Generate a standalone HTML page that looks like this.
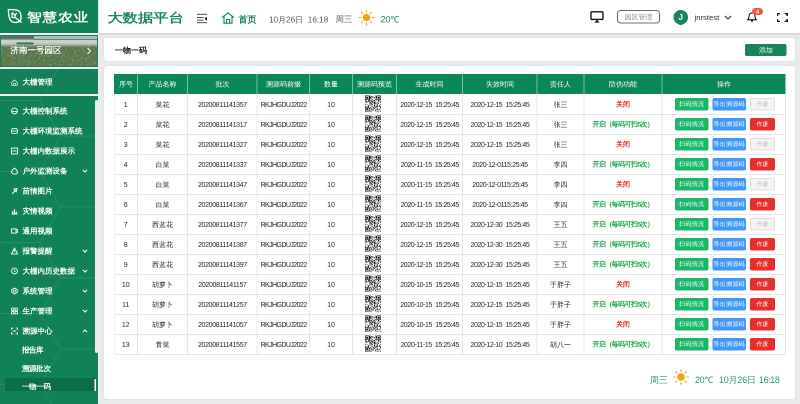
<!DOCTYPE html>
<html><head><meta charset="utf-8">
<style>
*{box-sizing:border-box;margin:0;padding:0}
html,body{width:800px;height:404px;overflow:hidden;background:#eaeaec;font-family:"Liberation Sans",sans-serif}
.abs{position:absolute}
#side{position:absolute;left:0;top:0;width:198px;height:808px;background:#f1eaee}
#logo{position:absolute;left:0;top:0;width:196px;height:66px;background:#118157}
#logo .t{position:absolute;left:54px;top:20px;font-size:29px;font-weight:bold;color:#fff;letter-spacing:2px;white-space:nowrap;line-height:28px;transform-origin:0 50%;transform:scaleY(.85)}
#banner{position:absolute;left:0;top:70px;width:196px;height:64px;background:#118157;padding:2px}
#banner .img{position:absolute;left:2px;top:2px;width:192px;height:60px;overflow:hidden;
 background:linear-gradient(180deg,#9fb0a8 0px,#c5cec9 8px,#d3dad6 16px,#aeb9b0 22px,#7b916c 26px,#6a8558 36px,#5e7a4e 60px)}
#banner .t{position:absolute;left:19px;top:18.6px;font-size:16.6px;font-weight:bold;color:#fff;text-shadow:0 0 2px rgba(0,0,0,.35);white-space:nowrap;line-height:20px}
#m1{position:absolute;left:0;top:138px;width:196px;height:50px;background:#118157}
#m2{position:absolute;left:0;top:192px;width:196px;height:616px;background:#118157;overflow:hidden}
.mi{position:absolute;left:45px;font-size:15px;font-weight:bold;letter-spacing:0;color:#fff;white-space:nowrap;line-height:20px}
.ic{position:absolute;left:22px;width:14px;height:14px}
.chev{position:absolute;left:164px;width:12px;height:8px}
#scroll{position:absolute;left:190px;top:200px;width:6px;height:506px;background:#e9eee9;border-radius:4px}
#act{position:absolute;left:10px;top:756px;width:182px;height:26px;background:#0b6e45}
#head{position:absolute;left:198px;top:0;width:1402px;height:66px;background:#fff;box-shadow:0 2px 4px rgba(0,0,0,.15)}
.card{position:absolute;background:#fff;border-radius:6px;box-shadow:0 0 4px rgba(0,0,0,.08)}
#c1{left:208px;top:76px;width:1382px;height:46px}
#c2{left:208px;top:132px;width:1382px;height:666px}
#tbl{position:absolute;left:228px;top:148px;width:1343px;height:560px;font-size:14px;color:#333}
.thead{position:absolute;left:0;top:0;width:1343px;height:40px;background:#0b8858}
.th{position:absolute;top:0;height:40px;line-height:40px;text-align:center;color:#fff;font-size:14px;white-space:nowrap}
.vlh{position:absolute;top:0;width:2px;height:40px;background:rgba(255,255,255,.45)}
.tr{position:absolute;left:0;width:1343px;height:42px;border-bottom:2px solid #e6e6e6}
.td{position:absolute;top:2px;height:38px;line-height:38px;text-align:center;white-space:pre;font-size:14px;color:#262626}
.td.qr{top:0;padding-top:3.4px;line-height:0}
.td.on{color:#1aa64a;font-weight:bold;font-size:13.6px;letter-spacing:-1.1px}
.td.off{color:#e52a2a;font-weight:bold;font-size:13.6px}
.vl{position:absolute;width:2px;background:#e6e6e6}
.ops{position:absolute;top:8px;height:26px}
.ops span{position:absolute;top:0;display:block;height:25.4px;line-height:25.4px;border-radius:4px;color:#fff;font-size:12.4px;font-weight:normal;letter-spacing:0.7px;text-indent:0.7px;text-align:center;white-space:nowrap}
.b1{left:26px;width:66.6px;background:#1ab66a}
.b2{left:100.6px;width:67px;background:#3f97f6}
.b3{left:176.4px;width:49.4px;background:#e3302d}
.b3.dis{background:#f4f4f4;color:#bbb !important;border:2px solid #dedede;line-height:21.4px !important}
.foot{position:absolute;top:748px;font-size:18px;color:#2a9a62;white-space:nowrap;line-height:24px}
#root{position:absolute;left:0;top:0;width:1600px;height:808px;transform:scale(.5);transform-origin:0 0;will-change:transform}
</style></head><body><div id="root">
<div id="side">
  <div id="logo">
    <svg class="abs" style="left:8px;top:12px" width="48" height="40" viewBox="0 0 24 20"><path d="M4.4 3.6 C8 3.4 12 3.6 14.5 4.8 C16.8 6 17.2 9 17 12.5 C16.6 14.8 14.5 16.4 11.5 16.5 C8.5 16.6 6.5 15 5.6 12.5 C4.8 10 4.5 6.5 4.4 3.6 Z" fill="none" stroke="#fff" stroke-width="1.35"/><path d="M8 6.5 V11.5 H11.3 M8.6 6.6 L11 9.8 L12.6 6.8 M11 9.8 V11.2 L17.6 16.6" fill="none" stroke="#fff" stroke-width="1.25"/></svg>
    <div class="t">智慧农业</div>
  </div>
  <div id="banner"><div class="img">
    <div class="abs" style="left:0;top:0;width:194px;height:8px;background:#aebcba"></div>
    <div class="abs" style="left:0;top:0;width:66px;height:8px;background:#5f6f62"></div>
    <div class="abs" style="left:0;top:7px;width:194px;height:12px;background:#c6d0ca"></div>
    <div class="abs" style="left:66px;top:6px;width:128px;height:2.4px;background:#6f7d74"></div>
    <div class="abs" style="left:0;top:15px;width:194px;height:3px;background:#b3beb7"></div>
    <div class="abs" style="left:0;top:18px;width:194px;height:3px;background:#8d9b8c"></div>
    <div class="abs" style="left:0;top:21px;width:194px;height:39px;background:#5a774c"></div>
    <svg viewBox="0 0 97 20" class="abs" style="left:0;top:21px" width="194" height="40"><filter id="nz" x="0" y="0" width="100%" height="100%"><feTurbulence type="fractalNoise" baseFrequency=".45" numOctaves="2" seed="3"/><feColorMatrix values="0 0 0 0 .5  0 0 0 0 .62  0 0 0 0 .44  0 0 0 1.0 -.48"/></filter><rect width="97" height="20" filter="url(#nz)"/></svg>
    <div class="abs" style="left:30px;top:12px;width:36px;height:6px;background:#1a7f52;border:1px solid #b9cdbf"></div>
    <div class="t">济南一号园区</div>
    <svg class="abs" style="left:171px;top:23px" width="10" height="14" viewBox="0 0 5 7"><path d="M1 0.5 L4 3.5 L1 6.5" fill="none" stroke="#fff" stroke-width="1"/></svg>
  </div></div>
  <div id="m1"><svg viewBox="0 0 98 25" class="abs" style="left:0;top:0" width="196" height="50"><path d="M40.0 31.5L60.5 -4.0M40.0 -39.5L60.5 -75.0M-1.0 31.5L40.0 31.5M40.0 -39.5L60.5 -4.0M101.5 -4.0L122.0 -39.5M101.5 67.0L122.0 31.5M40.0 31.5L60.5 67.0M101.5 -75.0L122.0 -39.5M101.5 -4.0L122.0 31.5M60.5 -75.0L101.5 -75.0M-1.0 -39.5L40.0 -39.5M60.5 67.0L101.5 67.0M60.5 -4.0L101.5 -4.0M-21.5 -4.0L-1.0 -39.5M-21.5 -4.0L-1.0 31.5" fill="none" stroke="rgba(255,255,255,.1)" stroke-width=".9"/></svg>
    <svg class="ic" style="top:20px" viewBox="0 0 6 6"><path d="M0.7 2.9 L3 0.8 L5.3 2.9 V5.4 H0.7 Z M2.1 5.4 V4 H3.9 V5.4" fill="none" stroke="#fff" stroke-width=".6"/></svg>
    <div class="mi" style="top:16px">大棚管理</div>
  </div>
  <div id="m2"><svg viewBox="0 0 98 308" class="abs" style="left:0;top:0" width="196" height="616"><path d="M-1.0 75.5L40.0 75.5M101.5 40.0L122.0 4.5M40.0 146.5L60.5 111.0M-21.5 111.0L-1.0 75.5M40.0 146.5L60.5 182.0M-21.5 111.0L-1.0 146.5M60.5 324.0L101.5 324.0M101.5 40.0L122.0 75.5M101.5 324.0L122.0 288.5M60.5 111.0L101.5 111.0M-1.0 359.5L40.0 359.5M-1.0 146.5L40.0 146.5M40.0 -66.5L60.5 -31.0M40.0 217.5L60.5 182.0M40.0 217.5L60.5 253.0M101.5 111.0L122.0 75.5M101.5 111.0L122.0 146.5M-21.5 182.0L-1.0 146.5M-21.5 182.0L-1.0 217.5M60.5 182.0L101.5 182.0M-1.0 -66.5L40.0 -66.5M40.0 4.5L60.5 -31.0M-1.0 217.5L40.0 217.5M40.0 4.5L60.5 40.0M40.0 288.5L60.5 253.0M40.0 288.5L60.5 324.0M-21.5 253.0L-1.0 217.5M-21.5 253.0L-1.0 288.5M60.5 -31.0L101.5 -31.0M-21.5 -31.0L-1.0 -66.5M101.5 182.0L122.0 146.5M-21.5 -31.0L-1.0 4.5M101.5 182.0L122.0 217.5M40.0 75.5L60.5 40.0M40.0 75.5L60.5 111.0M-1.0 4.5L40.0 4.5M40.0 359.5L60.5 324.0M-1.0 288.5L40.0 288.5M101.5 -31.0L122.0 4.5M-21.5 40.0L-1.0 4.5M101.5 253.0L122.0 217.5M-21.5 40.0L-1.0 75.5M60.5 253.0L101.5 253.0M101.5 253.0L122.0 288.5M60.5 40.0L101.5 40.0M-21.5 324.0L-1.0 288.5M-21.5 324.0L-1.0 359.5" fill="none" stroke="rgba(255,255,255,.1)" stroke-width=".9"/></svg>
<svg class="ic" style="top:23px" viewBox="0 0 6 6"><circle cx="3" cy="3" r="2.5" fill="none" stroke="#fff" stroke-width=".8"/><path d="M1 3.5H5" stroke="#fff" stroke-width=".8"/></svg><div class="mi" style="top:20px">大棚控制系统</div>
<svg class="ic" style="top:63px" viewBox="0 0 6 6"><rect x=".5" y=".8" width="5" height="4.4" rx="1.5" fill="none" stroke="#fff" stroke-width=".8"/><path d="M1 3H5" stroke="#fff" stroke-width=".8"/></svg><div class="mi" style="top:60px">大棚环境监测系统</div>
<svg class="ic" style="top:103px" viewBox="0 0 6 6"><rect x=".5" y=".5" width="5" height="5" fill="none" stroke="#fff" stroke-width=".8"/><path d="M1.5 3.5L3 2.5L4.5 3.5" fill="none" stroke="#fff" stroke-width=".7"/></svg><div class="mi" style="top:100px">大棚内数据展示</div>
<svg class="ic" style="top:143.2px" viewBox="0 0 6 6"><path d="M3 .5C5 2 5.5 3.5 5.5 4 C5.5 5 4.5 5.6 3 5.6 C1.5 5.6 .5 5 .5 4 C.5 3 1.5 1.5 3 .5Z" fill="none" stroke="#fff" stroke-width=".8"/></svg><div class="mi" style="top:140.2px">户外监测设备</div>
<svg class="chev" style="top:146.2px" viewBox="0 0 6 4"><path d="M.8 .8L3 3L5.2 .8" fill="none" stroke="#fff" stroke-width="1"/></svg>
<svg class="ic" style="top:183.2px" viewBox="0 0 6 6"><path d="M1 5.5L3.5 3 M2.5 1.5 L5 .8 L4.5 3.5 Z" fill="none" stroke="#fff" stroke-width=".9"/></svg><div class="mi" style="top:180.2px">苗情图片</div>
<svg class="ic" style="top:223.2px" viewBox="0 0 6 6"><path d="M.5 5.5H5.5 M1.5 5V3 M3 5V1.5 M4.5 5V3.5" stroke="#fff" stroke-width="1"/></svg><div class="mi" style="top:220.2px">灾情视频</div>
<svg class="ic" style="top:263.2px" viewBox="0 0 6 6"><rect x=".5" y="1.2" width="3.8" height="3.6" fill="none" stroke="#fff" stroke-width=".8"/><path d="M4.3 2.5L5.8 1.6V4.4L4.3 3.5" fill="none" stroke="#fff" stroke-width=".7"/></svg><div class="mi" style="top:260.2px">通用视频</div>
<svg class="ic" style="top:303.2px" viewBox="0 0 6 6"><path d="M3 .5L5.7 5.5H.3Z M3 2.2V3.8" fill="none" stroke="#fff" stroke-width=".8"/></svg><div class="mi" style="top:300.2px">报警提醒</div>
<svg class="chev" style="top:306.2px" viewBox="0 0 6 4"><path d="M.8 .8L3 3L5.2 .8" fill="none" stroke="#fff" stroke-width="1"/></svg>
<svg class="ic" style="top:343.4px" viewBox="0 0 6 6"><circle cx="3" cy="3" r="2.5" fill="none" stroke="#fff" stroke-width=".8"/><path d="M3 1.6V3.2L4 3.8" fill="none" stroke="#fff" stroke-width=".7"/></svg><div class="mi" style="top:340.4px">大棚内历史数据</div>
<svg class="chev" style="top:346.4px" viewBox="0 0 6 4"><path d="M.8 .8L3 3L5.2 .8" fill="none" stroke="#fff" stroke-width="1"/></svg>
<svg class="ic" style="top:383.4px" viewBox="0 0 6 6"><path d="M3 .5L5.3 1.8V4.2L3 5.5L.7 4.2V1.8Z" fill="none" stroke="#fff" stroke-width=".8"/><circle cx="3" cy="3" r=".9" fill="none" stroke="#fff" stroke-width=".6"/></svg><div class="mi" style="top:380.4px">系统管理</div>
<svg class="chev" style="top:386.4px" viewBox="0 0 6 4"><path d="M.8 .8L3 3L5.2 .8" fill="none" stroke="#fff" stroke-width="1"/></svg>
<svg class="ic" style="top:423.4px" viewBox="0 0 6 6"><rect x=".5" y=".5" width="2" height="2" fill="none" stroke="#fff" stroke-width=".7"/><rect x="3.5" y=".5" width="2" height="2" fill="none" stroke="#fff" stroke-width=".7"/><rect x=".5" y="3.5" width="2" height="2" fill="none" stroke="#fff" stroke-width=".7"/><rect x="3.5" y="3.5" width="2" height="2" fill="none" stroke="#fff" stroke-width=".7"/></svg><div class="mi" style="top:420.4px">生产管理</div>
<svg class="chev" style="top:426.4px" viewBox="0 0 6 4"><path d="M.8 .8L3 3L5.2 .8" fill="none" stroke="#fff" stroke-width="1"/></svg>
<svg class="ic" style="top:463.4px" viewBox="0 0 6 6"><path d="M.5 2V.5H2 M4 .5H5.5V2 M5.5 4V5.5H4 M2 5.5H.5V4 M1.5 3H4.5" fill="none" stroke="#fff" stroke-width=".8"/></svg><div class="mi" style="top:460.4px">溯源中心</div>
<svg class="chev" style="top:466.4px" viewBox="0 0 6 4"><path d="M.8 3.2L3 1L5.2 3.2" fill="none" stroke="#fff" stroke-width="1"/></svg>
<div class="abs" style="left:10px;top:564px;width:182px;height:26px;background:#0b6e45"></div>
<div class="abs" style="left:189.2px;top:566px;width:2.8px;height:24px;background:#fff"></div>
<div class="mi" style="left:43.6px;top:498px;font-size:15px;letter-spacing:-0.6px">报告库</div>
<div class="mi" style="left:43.6px;top:534.8px;font-size:15px;letter-spacing:-0.6px">溯源批次</div>
<div class="mi" style="left:43.6px;top:571px;font-size:15px;letter-spacing:-0.6px">一物一码</div>
  </div>
  <div id="scroll"></div>
</div>
<div id="head">
  <div class="abs" style="left:17px;top:22px;font-size:29px;font-weight:bold;color:#17855a;white-space:nowrap;line-height:26px;letter-spacing:0px;transform-origin:0 50%;transform:scale(1.05,.85)">大数据平台</div>
  <svg class="abs" style="left:194px;top:26px" width="22" height="22" viewBox="0 0 11 11"><path d="M1 1.25H11 M1 4.4H7.5 M1 7.1H7.5 M1 9.8H11" fill="none" stroke="#111" stroke-width=".75"/><path d="M11 3.6V7.8L8.4 5.7Z" fill="#111"/></svg>
  <svg class="abs" style="left:244px;top:24px" width="28" height="24" viewBox="0 0 14 12"><path d="M1 5.6 L7 0.8 L13 5.6 M3 4.5 V11.2 H11 V4.5 M5.6 11.2 V7.4 H8.6 V11.2" fill="none" stroke="#17855a" stroke-width="1.15" stroke-linejoin="miter"/></svg>
  <div class="abs" style="left:279px;top:28px;font-size:18px;font-weight:bold;color:#17855a;line-height:22px">首页</div>
  <div class="abs" style="left:340px;top:28px;font-size:16.4px;color:#555;line-height:22px;white-space:nowrap">10月26日&nbsp; 16:18</div>
  <div class="abs" style="left:473px;top:28px;font-size:17px;color:#555;line-height:22px">周三</div>
  <svg class="abs" style="left:519.2px;top:18.6px" width="32" height="32" viewBox="0 0 16 16"><circle cx="8" cy="8" r="3.8" fill="#f0a417"/><g stroke="#f0a417" stroke-width="1.1" stroke-linecap="round"><path d="M8 0.6V2.4 M8 13.6V15.4 M0.6 8H2.4 M13.6 8H15.4 M2.8 2.8L4 4 M12 12L13.2 13.2 M13.2 2.8L12 4 M4 12L2.8 13.2"/></g></svg>
  <div class="abs" style="left:563px;top:28px;font-size:18px;color:#17855a;line-height:22px;white-space:nowrap">20℃</div>
  <svg class="abs" style="left:982px;top:22px" width="28" height="24" viewBox="0 0 14 12"><rect x="1" y=".85" width="12" height="7.6" rx=".8" fill="none" stroke="#111" stroke-width="1.35"/><path d="M4.5 11.6 L7 8.6 L9.5 11.6 Z" fill="#111"/></svg>
  <div class="abs" style="left:1036px;top:20px;width:86px;height:27px;border:2px solid #6a6a6a;border-radius:7px;font-size:13.5px;color:#8a8a8a;text-align:center;line-height:25.2px">园区管理</div>
  <div class="abs" style="left:1149px;top:20px;width:29px;height:29px;border-radius:50%;background:#17855a;color:#fff;font-size:16px;font-weight:bold;text-align:center;line-height:29px">J</div>
  <div class="abs" style="left:1191px;top:24px;font-size:15.4px;color:#333;line-height:22px">jnrstest</div>
  <div class="abs" style="left:1248px;top:24px;width:20px;height:20px;background:#f9f9f9"></div>
  <svg class="abs" style="left:1250px;top:30px" width="16" height="10" viewBox="0 0 8 5"><path d="M1 1 L4 4 L7 1" fill="none" stroke="#222" stroke-width=".9"/></svg>
  <svg class="abs" style="left:1294px;top:22px" width="24" height="24" viewBox="0 0 12 12"><path d="M2.3 8.7 L3.1 4.6 C3.4 2.9 4.5 2 6 2 C7.5 2 8.6 2.9 8.9 4.6 L9.7 8.7" fill="none" stroke="#111" stroke-width="1.05" stroke-linejoin="round"/><path d="M.9 8.8 H11.1" stroke="#111" stroke-width="1.15"/><path d="M4.6 9.4 L6 11.4 L7.4 9.4 Z" fill="#111"/></svg>
  <div class="abs" style="left:1306px;top:16px;width:22px;height:14px;border-radius:8px;background:#f0533f;color:#fff;font-size:11px;font-weight:bold;line-height:14px;text-align:center">4</div>
  <svg class="abs" style="left:1356px;top:26px" width="21" height="18" viewBox="0 0 10.5 9"><path d="M.6 2.9V.6H2.9 M7.6 .6H9.9V2.9 M9.9 6.1V8.4H7.6 M2.9 8.4H.6V6.1" fill="none" stroke="#111" stroke-width="1.2"/></svg>
</div>
<div class="card" id="c1">
  <div class="abs" style="left:22px;top:15px;font-size:16px;font-weight:bold;color:#111;line-height:20px">一物一码</div>
  <div class="abs" style="left:1282px;top:11.5px;width:83px;height:24.5px;background:#17855a;border-radius:4px;color:#fff;font-size:14px;text-align:center;line-height:24.5px">添加</div>
</div>
<div class="card" id="c2"></div>
<div id="tbl">
<div class="thead"><div class="th" style="left:0px;width:47px">序号</div><div class="th" style="left:47px;width:100px">产品名称</div><div class="th" style="left:147px;width:139px">批次</div><div class="th" style="left:286px;width:105px">溯源码前缀</div><div class="th" style="left:391px;width:86px">数量</div><div class="th" style="left:477px;width:88px">溯源码预览</div><div class="th" style="left:565px;width:132px">生成时间</div><div class="th" style="left:697px;width:149px">失效时间</div><div class="th" style="left:846px;width:94px">责任人</div><div class="th" style="left:940px;width:156px">防伪功能</div><div class="th" style="left:1096px;width:247px">操作</div><div class="vlh" style="left:46px"></div><div class="vlh" style="left:146px"></div><div class="vlh" style="left:285px"></div><div class="vlh" style="left:390px"></div><div class="vlh" style="left:476px"></div><div class="vlh" style="left:564px"></div><div class="vlh" style="left:696px"></div><div class="vlh" style="left:845px"></div><div class="vlh" style="left:939px"></div><div class="vlh" style="left:1095px"></div></div>
<div class="tr" style="top:40px"><div class="td" style="left:0px;width:47px;letter-spacing:0px;text-indent:0px">1</div><div class="td" style="left:47px;width:100px;letter-spacing:0px;text-indent:0px">菜花</div><div class="td" style="left:147px;width:139px;letter-spacing:-0.66px;text-indent:0.66px">20200811141357</div><div class="td" style="left:286px;width:105px;letter-spacing:-1.16px;text-indent:1.16px">RKJHGDUJ2022</div><div class="td" style="left:391px;width:86px;letter-spacing:0px;text-indent:0px">10</div><div class="td qr" style="left:474px;width:88px"><svg width="32" height="32" viewBox="0 0 25 25"><path d="M0 0h7v1h-7zM8 0h1v1h-1zM16 0h1v1h-1zM18 0h7v1h-7zM0 1h1v1h-1zM6 1h2v1h-2zM9 1h3v1h-3zM17 1h2v1h-2zM24 1h1v1h-1zM0 2h1v1h-1zM2 2h3v1h-3zM6 2h3v1h-3zM11 2h1v1h-1zM13 2h1v1h-1zM15 2h4v1h-4zM20 2h3v1h-3zM24 2h1v1h-1zM0 3h1v1h-1zM2 3h3v1h-3zM6 3h4v1h-4zM12 3h1v1h-1zM14 3h1v1h-1zM17 3h2v1h-2zM20 3h3v1h-3zM24 3h1v1h-1zM0 4h1v1h-1zM2 4h3v1h-3zM6 4h3v1h-3zM10 4h1v1h-1zM15 4h1v1h-1zM18 4h1v1h-1zM20 4h3v1h-3zM24 4h1v1h-1zM0 5h1v1h-1zM6 5h1v1h-1zM10 5h1v1h-1zM12 5h1v1h-1zM17 5h2v1h-2zM24 5h1v1h-1zM0 6h8v1h-8zM11 6h1v1h-1zM15 6h2v1h-2zM18 6h7v1h-7zM0 7h1v1h-1zM2 7h1v1h-1zM5 7h2v1h-2zM8 7h2v1h-2zM13 7h2v1h-2zM17 7h1v1h-1zM20 7h2v1h-2zM23 7h1v1h-1zM1 8h1v1h-1zM5 8h3v1h-3zM9 8h2v1h-2zM12 8h1v1h-1zM14 8h2v1h-2zM20 8h2v1h-2zM1 9h3v1h-3zM5 9h1v1h-1zM7 9h1v1h-1zM10 9h3v1h-3zM16 9h1v1h-1zM20 9h1v1h-1zM23 9h2v1h-2zM0 10h1v1h-1zM3 10h1v1h-1zM7 10h2v1h-2zM11 10h2v1h-2zM14 10h2v1h-2zM19 10h1v1h-1zM21 10h1v1h-1zM23 10h2v1h-2zM0 11h1v1h-1zM2 11h1v1h-1zM6 11h1v1h-1zM8 11h2v1h-2zM11 11h1v1h-1zM13 11h3v1h-3zM17 11h1v1h-1zM7 12h1v1h-1zM9 12h2v1h-2zM14 12h3v1h-3zM18 12h1v1h-1zM20 12h2v1h-2zM8 13h1v1h-1zM10 13h2v1h-2zM19 13h1v1h-1zM24 13h1v1h-1zM0 14h2v1h-2zM3 14h1v1h-1zM7 14h1v1h-1zM9 14h1v1h-1zM11 14h1v1h-1zM14 14h2v1h-2zM17 14h1v1h-1zM19 14h1v1h-1zM23 14h1v1h-1zM5 15h2v1h-2zM9 15h1v1h-1zM14 15h2v1h-2zM18 15h2v1h-2zM22 15h1v1h-1zM0 16h1v1h-1zM4 16h2v1h-2zM11 16h1v1h-1zM14 16h2v1h-2zM19 16h1v1h-1zM22 16h2v1h-2zM0 17h1v1h-1zM4 17h2v1h-2zM9 17h1v1h-1zM12 17h1v1h-1zM15 17h1v1h-1zM17 17h3v1h-3zM21 17h1v1h-1zM23 17h2v1h-2zM0 18h7v1h-7zM8 18h1v1h-1zM11 18h1v1h-1zM13 18h1v1h-1zM16 18h2v1h-2zM24 18h1v1h-1zM0 19h1v1h-1zM6 19h1v1h-1zM8 19h1v1h-1zM10 19h1v1h-1zM13 19h2v1h-2zM16 19h1v1h-1zM18 19h2v1h-2zM24 19h1v1h-1zM0 20h1v1h-1zM2 20h3v1h-3zM6 20h2v1h-2zM10 20h1v1h-1zM13 20h2v1h-2zM19 20h1v1h-1zM23 20h1v1h-1zM0 21h1v1h-1zM2 21h3v1h-3zM6 21h1v1h-1zM8 21h1v1h-1zM10 21h1v1h-1zM12 21h1v1h-1zM15 21h1v1h-1zM18 21h1v1h-1zM21 21h2v1h-2zM0 22h1v1h-1zM2 22h3v1h-3zM6 22h1v1h-1zM10 22h2v1h-2zM13 22h1v1h-1zM16 22h1v1h-1zM18 22h3v1h-3zM23 22h1v1h-1zM0 23h1v1h-1zM6 23h2v1h-2zM12 23h1v1h-1zM16 23h1v1h-1zM0 24h7v1h-7zM8 24h3v1h-3zM16 24h1v1h-1zM18 24h2v1h-2zM21 24h1v1h-1zM23 24h2v1h-2z" fill="#111"/></svg></div><div class="td" style="left:565px;width:132px;letter-spacing:-0.8px;text-indent:0.8px">2020-12-15  15:25:45</div><div class="td" style="left:697px;width:149px;letter-spacing:-0.8px;text-indent:0.8px">2020-12-15  15:25:45</div><div class="td" style="left:846px;width:94px;letter-spacing:0px;text-indent:0px">张三</div><div class="td off" style="left:940px;width:156px">关闭</div><div class="ops" style="left:1096px;width:247px"><span class="b1">扫码情况</span><span class="b2">导出溯源码</span><span class="b3 dis">作废</span></div></div>
<div class="tr" style="top:80px"><div class="td" style="left:0px;width:47px;letter-spacing:0px;text-indent:0px">2</div><div class="td" style="left:47px;width:100px;letter-spacing:0px;text-indent:0px">菜花</div><div class="td" style="left:147px;width:139px;letter-spacing:-0.66px;text-indent:0.66px">20200811141317</div><div class="td" style="left:286px;width:105px;letter-spacing:-1.16px;text-indent:1.16px">RKJHGDUJ2022</div><div class="td" style="left:391px;width:86px;letter-spacing:0px;text-indent:0px">10</div><div class="td qr" style="left:474px;width:88px"><svg width="32" height="32" viewBox="0 0 25 25"><path d="M0 0h7v1h-7zM8 0h1v1h-1zM16 0h1v1h-1zM18 0h7v1h-7zM0 1h1v1h-1zM6 1h2v1h-2zM9 1h3v1h-3zM17 1h2v1h-2zM24 1h1v1h-1zM0 2h1v1h-1zM2 2h3v1h-3zM6 2h3v1h-3zM11 2h1v1h-1zM13 2h1v1h-1zM15 2h4v1h-4zM20 2h3v1h-3zM24 2h1v1h-1zM0 3h1v1h-1zM2 3h3v1h-3zM6 3h4v1h-4zM12 3h1v1h-1zM14 3h1v1h-1zM17 3h2v1h-2zM20 3h3v1h-3zM24 3h1v1h-1zM0 4h1v1h-1zM2 4h3v1h-3zM6 4h3v1h-3zM10 4h1v1h-1zM15 4h1v1h-1zM18 4h1v1h-1zM20 4h3v1h-3zM24 4h1v1h-1zM0 5h1v1h-1zM6 5h1v1h-1zM10 5h1v1h-1zM12 5h1v1h-1zM17 5h2v1h-2zM24 5h1v1h-1zM0 6h8v1h-8zM11 6h1v1h-1zM15 6h2v1h-2zM18 6h7v1h-7zM0 7h1v1h-1zM2 7h1v1h-1zM5 7h2v1h-2zM8 7h2v1h-2zM13 7h2v1h-2zM17 7h1v1h-1zM20 7h2v1h-2zM23 7h1v1h-1zM1 8h1v1h-1zM5 8h3v1h-3zM9 8h2v1h-2zM12 8h1v1h-1zM14 8h2v1h-2zM20 8h2v1h-2zM1 9h3v1h-3zM5 9h1v1h-1zM7 9h1v1h-1zM10 9h3v1h-3zM16 9h1v1h-1zM20 9h1v1h-1zM23 9h2v1h-2zM0 10h1v1h-1zM3 10h1v1h-1zM7 10h2v1h-2zM11 10h2v1h-2zM14 10h2v1h-2zM19 10h1v1h-1zM21 10h1v1h-1zM23 10h2v1h-2zM0 11h1v1h-1zM2 11h1v1h-1zM6 11h1v1h-1zM8 11h2v1h-2zM11 11h1v1h-1zM13 11h3v1h-3zM17 11h1v1h-1zM7 12h1v1h-1zM9 12h2v1h-2zM14 12h3v1h-3zM18 12h1v1h-1zM20 12h2v1h-2zM8 13h1v1h-1zM10 13h2v1h-2zM19 13h1v1h-1zM24 13h1v1h-1zM0 14h2v1h-2zM3 14h1v1h-1zM7 14h1v1h-1zM9 14h1v1h-1zM11 14h1v1h-1zM14 14h2v1h-2zM17 14h1v1h-1zM19 14h1v1h-1zM23 14h1v1h-1zM5 15h2v1h-2zM9 15h1v1h-1zM14 15h2v1h-2zM18 15h2v1h-2zM22 15h1v1h-1zM0 16h1v1h-1zM4 16h2v1h-2zM11 16h1v1h-1zM14 16h2v1h-2zM19 16h1v1h-1zM22 16h2v1h-2zM0 17h1v1h-1zM4 17h2v1h-2zM9 17h1v1h-1zM12 17h1v1h-1zM15 17h1v1h-1zM17 17h3v1h-3zM21 17h1v1h-1zM23 17h2v1h-2zM0 18h7v1h-7zM8 18h1v1h-1zM11 18h1v1h-1zM13 18h1v1h-1zM16 18h2v1h-2zM24 18h1v1h-1zM0 19h1v1h-1zM6 19h1v1h-1zM8 19h1v1h-1zM10 19h1v1h-1zM13 19h2v1h-2zM16 19h1v1h-1zM18 19h2v1h-2zM24 19h1v1h-1zM0 20h1v1h-1zM2 20h3v1h-3zM6 20h2v1h-2zM10 20h1v1h-1zM13 20h2v1h-2zM19 20h1v1h-1zM23 20h1v1h-1zM0 21h1v1h-1zM2 21h3v1h-3zM6 21h1v1h-1zM8 21h1v1h-1zM10 21h1v1h-1zM12 21h1v1h-1zM15 21h1v1h-1zM18 21h1v1h-1zM21 21h2v1h-2zM0 22h1v1h-1zM2 22h3v1h-3zM6 22h1v1h-1zM10 22h2v1h-2zM13 22h1v1h-1zM16 22h1v1h-1zM18 22h3v1h-3zM23 22h1v1h-1zM0 23h1v1h-1zM6 23h2v1h-2zM12 23h1v1h-1zM16 23h1v1h-1zM0 24h7v1h-7zM8 24h3v1h-3zM16 24h1v1h-1zM18 24h2v1h-2zM21 24h1v1h-1zM23 24h2v1h-2z" fill="#111"/></svg></div><div class="td" style="left:565px;width:132px;letter-spacing:-0.8px;text-indent:0.8px">2020-12-15  15:25:45</div><div class="td" style="left:697px;width:149px;letter-spacing:-0.8px;text-indent:0.8px">2020-12-15  15:25:45</div><div class="td" style="left:846px;width:94px;letter-spacing:0px;text-indent:0px">张三</div><div class="td on" style="left:940px;width:156px">开启（每码可扫5次）</div><div class="ops" style="left:1096px;width:247px"><span class="b1">扫码情况</span><span class="b2">导出溯源码</span><span class="b3">作废</span></div></div>
<div class="tr" style="top:120px"><div class="td" style="left:0px;width:47px;letter-spacing:0px;text-indent:0px">3</div><div class="td" style="left:47px;width:100px;letter-spacing:0px;text-indent:0px">菜花</div><div class="td" style="left:147px;width:139px;letter-spacing:-0.66px;text-indent:0.66px">20200811141327</div><div class="td" style="left:286px;width:105px;letter-spacing:-1.16px;text-indent:1.16px">RKJHGDUJ2022</div><div class="td" style="left:391px;width:86px;letter-spacing:0px;text-indent:0px">10</div><div class="td qr" style="left:474px;width:88px"><svg width="32" height="32" viewBox="0 0 25 25"><path d="M0 0h7v1h-7zM8 0h1v1h-1zM16 0h1v1h-1zM18 0h7v1h-7zM0 1h1v1h-1zM6 1h2v1h-2zM9 1h3v1h-3zM17 1h2v1h-2zM24 1h1v1h-1zM0 2h1v1h-1zM2 2h3v1h-3zM6 2h3v1h-3zM11 2h1v1h-1zM13 2h1v1h-1zM15 2h4v1h-4zM20 2h3v1h-3zM24 2h1v1h-1zM0 3h1v1h-1zM2 3h3v1h-3zM6 3h4v1h-4zM12 3h1v1h-1zM14 3h1v1h-1zM17 3h2v1h-2zM20 3h3v1h-3zM24 3h1v1h-1zM0 4h1v1h-1zM2 4h3v1h-3zM6 4h3v1h-3zM10 4h1v1h-1zM15 4h1v1h-1zM18 4h1v1h-1zM20 4h3v1h-3zM24 4h1v1h-1zM0 5h1v1h-1zM6 5h1v1h-1zM10 5h1v1h-1zM12 5h1v1h-1zM17 5h2v1h-2zM24 5h1v1h-1zM0 6h8v1h-8zM11 6h1v1h-1zM15 6h2v1h-2zM18 6h7v1h-7zM0 7h1v1h-1zM2 7h1v1h-1zM5 7h2v1h-2zM8 7h2v1h-2zM13 7h2v1h-2zM17 7h1v1h-1zM20 7h2v1h-2zM23 7h1v1h-1zM1 8h1v1h-1zM5 8h3v1h-3zM9 8h2v1h-2zM12 8h1v1h-1zM14 8h2v1h-2zM20 8h2v1h-2zM1 9h3v1h-3zM5 9h1v1h-1zM7 9h1v1h-1zM10 9h3v1h-3zM16 9h1v1h-1zM20 9h1v1h-1zM23 9h2v1h-2zM0 10h1v1h-1zM3 10h1v1h-1zM7 10h2v1h-2zM11 10h2v1h-2zM14 10h2v1h-2zM19 10h1v1h-1zM21 10h1v1h-1zM23 10h2v1h-2zM0 11h1v1h-1zM2 11h1v1h-1zM6 11h1v1h-1zM8 11h2v1h-2zM11 11h1v1h-1zM13 11h3v1h-3zM17 11h1v1h-1zM7 12h1v1h-1zM9 12h2v1h-2zM14 12h3v1h-3zM18 12h1v1h-1zM20 12h2v1h-2zM8 13h1v1h-1zM10 13h2v1h-2zM19 13h1v1h-1zM24 13h1v1h-1zM0 14h2v1h-2zM3 14h1v1h-1zM7 14h1v1h-1zM9 14h1v1h-1zM11 14h1v1h-1zM14 14h2v1h-2zM17 14h1v1h-1zM19 14h1v1h-1zM23 14h1v1h-1zM5 15h2v1h-2zM9 15h1v1h-1zM14 15h2v1h-2zM18 15h2v1h-2zM22 15h1v1h-1zM0 16h1v1h-1zM4 16h2v1h-2zM11 16h1v1h-1zM14 16h2v1h-2zM19 16h1v1h-1zM22 16h2v1h-2zM0 17h1v1h-1zM4 17h2v1h-2zM9 17h1v1h-1zM12 17h1v1h-1zM15 17h1v1h-1zM17 17h3v1h-3zM21 17h1v1h-1zM23 17h2v1h-2zM0 18h7v1h-7zM8 18h1v1h-1zM11 18h1v1h-1zM13 18h1v1h-1zM16 18h2v1h-2zM24 18h1v1h-1zM0 19h1v1h-1zM6 19h1v1h-1zM8 19h1v1h-1zM10 19h1v1h-1zM13 19h2v1h-2zM16 19h1v1h-1zM18 19h2v1h-2zM24 19h1v1h-1zM0 20h1v1h-1zM2 20h3v1h-3zM6 20h2v1h-2zM10 20h1v1h-1zM13 20h2v1h-2zM19 20h1v1h-1zM23 20h1v1h-1zM0 21h1v1h-1zM2 21h3v1h-3zM6 21h1v1h-1zM8 21h1v1h-1zM10 21h1v1h-1zM12 21h1v1h-1zM15 21h1v1h-1zM18 21h1v1h-1zM21 21h2v1h-2zM0 22h1v1h-1zM2 22h3v1h-3zM6 22h1v1h-1zM10 22h2v1h-2zM13 22h1v1h-1zM16 22h1v1h-1zM18 22h3v1h-3zM23 22h1v1h-1zM0 23h1v1h-1zM6 23h2v1h-2zM12 23h1v1h-1zM16 23h1v1h-1zM0 24h7v1h-7zM8 24h3v1h-3zM16 24h1v1h-1zM18 24h2v1h-2zM21 24h1v1h-1zM23 24h2v1h-2z" fill="#111"/></svg></div><div class="td" style="left:565px;width:132px;letter-spacing:-0.8px;text-indent:0.8px">2020-12-15  15:25:45</div><div class="td" style="left:697px;width:149px;letter-spacing:-0.8px;text-indent:0.8px">2020-12-15  15:25:45</div><div class="td" style="left:846px;width:94px;letter-spacing:0px;text-indent:0px">张三</div><div class="td off" style="left:940px;width:156px">关闭</div><div class="ops" style="left:1096px;width:247px"><span class="b1">扫码情况</span><span class="b2">导出溯源码</span><span class="b3 dis">作废</span></div></div>
<div class="tr" style="top:160px"><div class="td" style="left:0px;width:47px;letter-spacing:0px;text-indent:0px">4</div><div class="td" style="left:47px;width:100px;letter-spacing:0px;text-indent:0px">白菜</div><div class="td" style="left:147px;width:139px;letter-spacing:-0.66px;text-indent:0.66px">20200811141337</div><div class="td" style="left:286px;width:105px;letter-spacing:-1.16px;text-indent:1.16px">RKJHGDUJ2022</div><div class="td" style="left:391px;width:86px;letter-spacing:0px;text-indent:0px">10</div><div class="td qr" style="left:474px;width:88px"><svg width="32" height="32" viewBox="0 0 25 25"><path d="M0 0h7v1h-7zM8 0h1v1h-1zM16 0h1v1h-1zM18 0h7v1h-7zM0 1h1v1h-1zM6 1h2v1h-2zM9 1h3v1h-3zM17 1h2v1h-2zM24 1h1v1h-1zM0 2h1v1h-1zM2 2h3v1h-3zM6 2h3v1h-3zM11 2h1v1h-1zM13 2h1v1h-1zM15 2h4v1h-4zM20 2h3v1h-3zM24 2h1v1h-1zM0 3h1v1h-1zM2 3h3v1h-3zM6 3h4v1h-4zM12 3h1v1h-1zM14 3h1v1h-1zM17 3h2v1h-2zM20 3h3v1h-3zM24 3h1v1h-1zM0 4h1v1h-1zM2 4h3v1h-3zM6 4h3v1h-3zM10 4h1v1h-1zM15 4h1v1h-1zM18 4h1v1h-1zM20 4h3v1h-3zM24 4h1v1h-1zM0 5h1v1h-1zM6 5h1v1h-1zM10 5h1v1h-1zM12 5h1v1h-1zM17 5h2v1h-2zM24 5h1v1h-1zM0 6h8v1h-8zM11 6h1v1h-1zM15 6h2v1h-2zM18 6h7v1h-7zM0 7h1v1h-1zM2 7h1v1h-1zM5 7h2v1h-2zM8 7h2v1h-2zM13 7h2v1h-2zM17 7h1v1h-1zM20 7h2v1h-2zM23 7h1v1h-1zM1 8h1v1h-1zM5 8h3v1h-3zM9 8h2v1h-2zM12 8h1v1h-1zM14 8h2v1h-2zM20 8h2v1h-2zM1 9h3v1h-3zM5 9h1v1h-1zM7 9h1v1h-1zM10 9h3v1h-3zM16 9h1v1h-1zM20 9h1v1h-1zM23 9h2v1h-2zM0 10h1v1h-1zM3 10h1v1h-1zM7 10h2v1h-2zM11 10h2v1h-2zM14 10h2v1h-2zM19 10h1v1h-1zM21 10h1v1h-1zM23 10h2v1h-2zM0 11h1v1h-1zM2 11h1v1h-1zM6 11h1v1h-1zM8 11h2v1h-2zM11 11h1v1h-1zM13 11h3v1h-3zM17 11h1v1h-1zM7 12h1v1h-1zM9 12h2v1h-2zM14 12h3v1h-3zM18 12h1v1h-1zM20 12h2v1h-2zM8 13h1v1h-1zM10 13h2v1h-2zM19 13h1v1h-1zM24 13h1v1h-1zM0 14h2v1h-2zM3 14h1v1h-1zM7 14h1v1h-1zM9 14h1v1h-1zM11 14h1v1h-1zM14 14h2v1h-2zM17 14h1v1h-1zM19 14h1v1h-1zM23 14h1v1h-1zM5 15h2v1h-2zM9 15h1v1h-1zM14 15h2v1h-2zM18 15h2v1h-2zM22 15h1v1h-1zM0 16h1v1h-1zM4 16h2v1h-2zM11 16h1v1h-1zM14 16h2v1h-2zM19 16h1v1h-1zM22 16h2v1h-2zM0 17h1v1h-1zM4 17h2v1h-2zM9 17h1v1h-1zM12 17h1v1h-1zM15 17h1v1h-1zM17 17h3v1h-3zM21 17h1v1h-1zM23 17h2v1h-2zM0 18h7v1h-7zM8 18h1v1h-1zM11 18h1v1h-1zM13 18h1v1h-1zM16 18h2v1h-2zM24 18h1v1h-1zM0 19h1v1h-1zM6 19h1v1h-1zM8 19h1v1h-1zM10 19h1v1h-1zM13 19h2v1h-2zM16 19h1v1h-1zM18 19h2v1h-2zM24 19h1v1h-1zM0 20h1v1h-1zM2 20h3v1h-3zM6 20h2v1h-2zM10 20h1v1h-1zM13 20h2v1h-2zM19 20h1v1h-1zM23 20h1v1h-1zM0 21h1v1h-1zM2 21h3v1h-3zM6 21h1v1h-1zM8 21h1v1h-1zM10 21h1v1h-1zM12 21h1v1h-1zM15 21h1v1h-1zM18 21h1v1h-1zM21 21h2v1h-2zM0 22h1v1h-1zM2 22h3v1h-3zM6 22h1v1h-1zM10 22h2v1h-2zM13 22h1v1h-1zM16 22h1v1h-1zM18 22h3v1h-3zM23 22h1v1h-1zM0 23h1v1h-1zM6 23h2v1h-2zM12 23h1v1h-1zM16 23h1v1h-1zM0 24h7v1h-7zM8 24h3v1h-3zM16 24h1v1h-1zM18 24h2v1h-2zM21 24h1v1h-1zM23 24h2v1h-2z" fill="#111"/></svg></div><div class="td" style="left:565px;width:132px;letter-spacing:-0.8px;text-indent:0.8px">2020-11-15  15:25:45</div><div class="td" style="left:697px;width:149px;letter-spacing:-0.8px;text-indent:0.8px">2020-12-0115:25:45</div><div class="td" style="left:846px;width:94px;letter-spacing:0px;text-indent:0px">李四</div><div class="td on" style="left:940px;width:156px">开启（每码可扫5次）</div><div class="ops" style="left:1096px;width:247px"><span class="b1">扫码情况</span><span class="b2">导出溯源码</span><span class="b3">作废</span></div></div>
<div class="tr" style="top:200px"><div class="td" style="left:0px;width:47px;letter-spacing:0px;text-indent:0px">5</div><div class="td" style="left:47px;width:100px;letter-spacing:0px;text-indent:0px">白菜</div><div class="td" style="left:147px;width:139px;letter-spacing:-0.66px;text-indent:0.66px">20200811141347</div><div class="td" style="left:286px;width:105px;letter-spacing:-1.16px;text-indent:1.16px">RKJHGDUJ2022</div><div class="td" style="left:391px;width:86px;letter-spacing:0px;text-indent:0px">10</div><div class="td qr" style="left:474px;width:88px"><svg width="32" height="32" viewBox="0 0 25 25"><path d="M0 0h7v1h-7zM8 0h1v1h-1zM16 0h1v1h-1zM18 0h7v1h-7zM0 1h1v1h-1zM6 1h2v1h-2zM9 1h3v1h-3zM17 1h2v1h-2zM24 1h1v1h-1zM0 2h1v1h-1zM2 2h3v1h-3zM6 2h3v1h-3zM11 2h1v1h-1zM13 2h1v1h-1zM15 2h4v1h-4zM20 2h3v1h-3zM24 2h1v1h-1zM0 3h1v1h-1zM2 3h3v1h-3zM6 3h4v1h-4zM12 3h1v1h-1zM14 3h1v1h-1zM17 3h2v1h-2zM20 3h3v1h-3zM24 3h1v1h-1zM0 4h1v1h-1zM2 4h3v1h-3zM6 4h3v1h-3zM10 4h1v1h-1zM15 4h1v1h-1zM18 4h1v1h-1zM20 4h3v1h-3zM24 4h1v1h-1zM0 5h1v1h-1zM6 5h1v1h-1zM10 5h1v1h-1zM12 5h1v1h-1zM17 5h2v1h-2zM24 5h1v1h-1zM0 6h8v1h-8zM11 6h1v1h-1zM15 6h2v1h-2zM18 6h7v1h-7zM0 7h1v1h-1zM2 7h1v1h-1zM5 7h2v1h-2zM8 7h2v1h-2zM13 7h2v1h-2zM17 7h1v1h-1zM20 7h2v1h-2zM23 7h1v1h-1zM1 8h1v1h-1zM5 8h3v1h-3zM9 8h2v1h-2zM12 8h1v1h-1zM14 8h2v1h-2zM20 8h2v1h-2zM1 9h3v1h-3zM5 9h1v1h-1zM7 9h1v1h-1zM10 9h3v1h-3zM16 9h1v1h-1zM20 9h1v1h-1zM23 9h2v1h-2zM0 10h1v1h-1zM3 10h1v1h-1zM7 10h2v1h-2zM11 10h2v1h-2zM14 10h2v1h-2zM19 10h1v1h-1zM21 10h1v1h-1zM23 10h2v1h-2zM0 11h1v1h-1zM2 11h1v1h-1zM6 11h1v1h-1zM8 11h2v1h-2zM11 11h1v1h-1zM13 11h3v1h-3zM17 11h1v1h-1zM7 12h1v1h-1zM9 12h2v1h-2zM14 12h3v1h-3zM18 12h1v1h-1zM20 12h2v1h-2zM8 13h1v1h-1zM10 13h2v1h-2zM19 13h1v1h-1zM24 13h1v1h-1zM0 14h2v1h-2zM3 14h1v1h-1zM7 14h1v1h-1zM9 14h1v1h-1zM11 14h1v1h-1zM14 14h2v1h-2zM17 14h1v1h-1zM19 14h1v1h-1zM23 14h1v1h-1zM5 15h2v1h-2zM9 15h1v1h-1zM14 15h2v1h-2zM18 15h2v1h-2zM22 15h1v1h-1zM0 16h1v1h-1zM4 16h2v1h-2zM11 16h1v1h-1zM14 16h2v1h-2zM19 16h1v1h-1zM22 16h2v1h-2zM0 17h1v1h-1zM4 17h2v1h-2zM9 17h1v1h-1zM12 17h1v1h-1zM15 17h1v1h-1zM17 17h3v1h-3zM21 17h1v1h-1zM23 17h2v1h-2zM0 18h7v1h-7zM8 18h1v1h-1zM11 18h1v1h-1zM13 18h1v1h-1zM16 18h2v1h-2zM24 18h1v1h-1zM0 19h1v1h-1zM6 19h1v1h-1zM8 19h1v1h-1zM10 19h1v1h-1zM13 19h2v1h-2zM16 19h1v1h-1zM18 19h2v1h-2zM24 19h1v1h-1zM0 20h1v1h-1zM2 20h3v1h-3zM6 20h2v1h-2zM10 20h1v1h-1zM13 20h2v1h-2zM19 20h1v1h-1zM23 20h1v1h-1zM0 21h1v1h-1zM2 21h3v1h-3zM6 21h1v1h-1zM8 21h1v1h-1zM10 21h1v1h-1zM12 21h1v1h-1zM15 21h1v1h-1zM18 21h1v1h-1zM21 21h2v1h-2zM0 22h1v1h-1zM2 22h3v1h-3zM6 22h1v1h-1zM10 22h2v1h-2zM13 22h1v1h-1zM16 22h1v1h-1zM18 22h3v1h-3zM23 22h1v1h-1zM0 23h1v1h-1zM6 23h2v1h-2zM12 23h1v1h-1zM16 23h1v1h-1zM0 24h7v1h-7zM8 24h3v1h-3zM16 24h1v1h-1zM18 24h2v1h-2zM21 24h1v1h-1zM23 24h2v1h-2z" fill="#111"/></svg></div><div class="td" style="left:565px;width:132px;letter-spacing:-0.8px;text-indent:0.8px">2020-11-15  15:25:45</div><div class="td" style="left:697px;width:149px;letter-spacing:-0.8px;text-indent:0.8px">2020-12-0115:25:45</div><div class="td" style="left:846px;width:94px;letter-spacing:0px;text-indent:0px">李四</div><div class="td off" style="left:940px;width:156px">关闭</div><div class="ops" style="left:1096px;width:247px"><span class="b1">扫码情况</span><span class="b2">导出溯源码</span><span class="b3 dis">作废</span></div></div>
<div class="tr" style="top:240px"><div class="td" style="left:0px;width:47px;letter-spacing:0px;text-indent:0px">6</div><div class="td" style="left:47px;width:100px;letter-spacing:0px;text-indent:0px">白菜</div><div class="td" style="left:147px;width:139px;letter-spacing:-0.66px;text-indent:0.66px">20200811141367</div><div class="td" style="left:286px;width:105px;letter-spacing:-1.16px;text-indent:1.16px">RKJHGDUJ2022</div><div class="td" style="left:391px;width:86px;letter-spacing:0px;text-indent:0px">10</div><div class="td qr" style="left:474px;width:88px"><svg width="32" height="32" viewBox="0 0 25 25"><path d="M0 0h7v1h-7zM8 0h1v1h-1zM16 0h1v1h-1zM18 0h7v1h-7zM0 1h1v1h-1zM6 1h2v1h-2zM9 1h3v1h-3zM17 1h2v1h-2zM24 1h1v1h-1zM0 2h1v1h-1zM2 2h3v1h-3zM6 2h3v1h-3zM11 2h1v1h-1zM13 2h1v1h-1zM15 2h4v1h-4zM20 2h3v1h-3zM24 2h1v1h-1zM0 3h1v1h-1zM2 3h3v1h-3zM6 3h4v1h-4zM12 3h1v1h-1zM14 3h1v1h-1zM17 3h2v1h-2zM20 3h3v1h-3zM24 3h1v1h-1zM0 4h1v1h-1zM2 4h3v1h-3zM6 4h3v1h-3zM10 4h1v1h-1zM15 4h1v1h-1zM18 4h1v1h-1zM20 4h3v1h-3zM24 4h1v1h-1zM0 5h1v1h-1zM6 5h1v1h-1zM10 5h1v1h-1zM12 5h1v1h-1zM17 5h2v1h-2zM24 5h1v1h-1zM0 6h8v1h-8zM11 6h1v1h-1zM15 6h2v1h-2zM18 6h7v1h-7zM0 7h1v1h-1zM2 7h1v1h-1zM5 7h2v1h-2zM8 7h2v1h-2zM13 7h2v1h-2zM17 7h1v1h-1zM20 7h2v1h-2zM23 7h1v1h-1zM1 8h1v1h-1zM5 8h3v1h-3zM9 8h2v1h-2zM12 8h1v1h-1zM14 8h2v1h-2zM20 8h2v1h-2zM1 9h3v1h-3zM5 9h1v1h-1zM7 9h1v1h-1zM10 9h3v1h-3zM16 9h1v1h-1zM20 9h1v1h-1zM23 9h2v1h-2zM0 10h1v1h-1zM3 10h1v1h-1zM7 10h2v1h-2zM11 10h2v1h-2zM14 10h2v1h-2zM19 10h1v1h-1zM21 10h1v1h-1zM23 10h2v1h-2zM0 11h1v1h-1zM2 11h1v1h-1zM6 11h1v1h-1zM8 11h2v1h-2zM11 11h1v1h-1zM13 11h3v1h-3zM17 11h1v1h-1zM7 12h1v1h-1zM9 12h2v1h-2zM14 12h3v1h-3zM18 12h1v1h-1zM20 12h2v1h-2zM8 13h1v1h-1zM10 13h2v1h-2zM19 13h1v1h-1zM24 13h1v1h-1zM0 14h2v1h-2zM3 14h1v1h-1zM7 14h1v1h-1zM9 14h1v1h-1zM11 14h1v1h-1zM14 14h2v1h-2zM17 14h1v1h-1zM19 14h1v1h-1zM23 14h1v1h-1zM5 15h2v1h-2zM9 15h1v1h-1zM14 15h2v1h-2zM18 15h2v1h-2zM22 15h1v1h-1zM0 16h1v1h-1zM4 16h2v1h-2zM11 16h1v1h-1zM14 16h2v1h-2zM19 16h1v1h-1zM22 16h2v1h-2zM0 17h1v1h-1zM4 17h2v1h-2zM9 17h1v1h-1zM12 17h1v1h-1zM15 17h1v1h-1zM17 17h3v1h-3zM21 17h1v1h-1zM23 17h2v1h-2zM0 18h7v1h-7zM8 18h1v1h-1zM11 18h1v1h-1zM13 18h1v1h-1zM16 18h2v1h-2zM24 18h1v1h-1zM0 19h1v1h-1zM6 19h1v1h-1zM8 19h1v1h-1zM10 19h1v1h-1zM13 19h2v1h-2zM16 19h1v1h-1zM18 19h2v1h-2zM24 19h1v1h-1zM0 20h1v1h-1zM2 20h3v1h-3zM6 20h2v1h-2zM10 20h1v1h-1zM13 20h2v1h-2zM19 20h1v1h-1zM23 20h1v1h-1zM0 21h1v1h-1zM2 21h3v1h-3zM6 21h1v1h-1zM8 21h1v1h-1zM10 21h1v1h-1zM12 21h1v1h-1zM15 21h1v1h-1zM18 21h1v1h-1zM21 21h2v1h-2zM0 22h1v1h-1zM2 22h3v1h-3zM6 22h1v1h-1zM10 22h2v1h-2zM13 22h1v1h-1zM16 22h1v1h-1zM18 22h3v1h-3zM23 22h1v1h-1zM0 23h1v1h-1zM6 23h2v1h-2zM12 23h1v1h-1zM16 23h1v1h-1zM0 24h7v1h-7zM8 24h3v1h-3zM16 24h1v1h-1zM18 24h2v1h-2zM21 24h1v1h-1zM23 24h2v1h-2z" fill="#111"/></svg></div><div class="td" style="left:565px;width:132px;letter-spacing:-0.8px;text-indent:0.8px">2020-11-15  15:25:45</div><div class="td" style="left:697px;width:149px;letter-spacing:-0.8px;text-indent:0.8px">2020-12-0115:25:45</div><div class="td" style="left:846px;width:94px;letter-spacing:0px;text-indent:0px">李四</div><div class="td on" style="left:940px;width:156px">开启（每码可扫5次）</div><div class="ops" style="left:1096px;width:247px"><span class="b1">扫码情况</span><span class="b2">导出溯源码</span><span class="b3">作废</span></div></div>
<div class="tr" style="top:280px"><div class="td" style="left:0px;width:47px;letter-spacing:0px;text-indent:0px">7</div><div class="td" style="left:47px;width:100px;letter-spacing:0px;text-indent:0px">西蓝花</div><div class="td" style="left:147px;width:139px;letter-spacing:-0.66px;text-indent:0.66px">20200811141377</div><div class="td" style="left:286px;width:105px;letter-spacing:-1.16px;text-indent:1.16px">RKJHGDUJ2022</div><div class="td" style="left:391px;width:86px;letter-spacing:0px;text-indent:0px">10</div><div class="td qr" style="left:474px;width:88px"><svg width="32" height="32" viewBox="0 0 25 25"><path d="M0 0h7v1h-7zM8 0h1v1h-1zM16 0h1v1h-1zM18 0h7v1h-7zM0 1h1v1h-1zM6 1h2v1h-2zM9 1h3v1h-3zM17 1h2v1h-2zM24 1h1v1h-1zM0 2h1v1h-1zM2 2h3v1h-3zM6 2h3v1h-3zM11 2h1v1h-1zM13 2h1v1h-1zM15 2h4v1h-4zM20 2h3v1h-3zM24 2h1v1h-1zM0 3h1v1h-1zM2 3h3v1h-3zM6 3h4v1h-4zM12 3h1v1h-1zM14 3h1v1h-1zM17 3h2v1h-2zM20 3h3v1h-3zM24 3h1v1h-1zM0 4h1v1h-1zM2 4h3v1h-3zM6 4h3v1h-3zM10 4h1v1h-1zM15 4h1v1h-1zM18 4h1v1h-1zM20 4h3v1h-3zM24 4h1v1h-1zM0 5h1v1h-1zM6 5h1v1h-1zM10 5h1v1h-1zM12 5h1v1h-1zM17 5h2v1h-2zM24 5h1v1h-1zM0 6h8v1h-8zM11 6h1v1h-1zM15 6h2v1h-2zM18 6h7v1h-7zM0 7h1v1h-1zM2 7h1v1h-1zM5 7h2v1h-2zM8 7h2v1h-2zM13 7h2v1h-2zM17 7h1v1h-1zM20 7h2v1h-2zM23 7h1v1h-1zM1 8h1v1h-1zM5 8h3v1h-3zM9 8h2v1h-2zM12 8h1v1h-1zM14 8h2v1h-2zM20 8h2v1h-2zM1 9h3v1h-3zM5 9h1v1h-1zM7 9h1v1h-1zM10 9h3v1h-3zM16 9h1v1h-1zM20 9h1v1h-1zM23 9h2v1h-2zM0 10h1v1h-1zM3 10h1v1h-1zM7 10h2v1h-2zM11 10h2v1h-2zM14 10h2v1h-2zM19 10h1v1h-1zM21 10h1v1h-1zM23 10h2v1h-2zM0 11h1v1h-1zM2 11h1v1h-1zM6 11h1v1h-1zM8 11h2v1h-2zM11 11h1v1h-1zM13 11h3v1h-3zM17 11h1v1h-1zM7 12h1v1h-1zM9 12h2v1h-2zM14 12h3v1h-3zM18 12h1v1h-1zM20 12h2v1h-2zM8 13h1v1h-1zM10 13h2v1h-2zM19 13h1v1h-1zM24 13h1v1h-1zM0 14h2v1h-2zM3 14h1v1h-1zM7 14h1v1h-1zM9 14h1v1h-1zM11 14h1v1h-1zM14 14h2v1h-2zM17 14h1v1h-1zM19 14h1v1h-1zM23 14h1v1h-1zM5 15h2v1h-2zM9 15h1v1h-1zM14 15h2v1h-2zM18 15h2v1h-2zM22 15h1v1h-1zM0 16h1v1h-1zM4 16h2v1h-2zM11 16h1v1h-1zM14 16h2v1h-2zM19 16h1v1h-1zM22 16h2v1h-2zM0 17h1v1h-1zM4 17h2v1h-2zM9 17h1v1h-1zM12 17h1v1h-1zM15 17h1v1h-1zM17 17h3v1h-3zM21 17h1v1h-1zM23 17h2v1h-2zM0 18h7v1h-7zM8 18h1v1h-1zM11 18h1v1h-1zM13 18h1v1h-1zM16 18h2v1h-2zM24 18h1v1h-1zM0 19h1v1h-1zM6 19h1v1h-1zM8 19h1v1h-1zM10 19h1v1h-1zM13 19h2v1h-2zM16 19h1v1h-1zM18 19h2v1h-2zM24 19h1v1h-1zM0 20h1v1h-1zM2 20h3v1h-3zM6 20h2v1h-2zM10 20h1v1h-1zM13 20h2v1h-2zM19 20h1v1h-1zM23 20h1v1h-1zM0 21h1v1h-1zM2 21h3v1h-3zM6 21h1v1h-1zM8 21h1v1h-1zM10 21h1v1h-1zM12 21h1v1h-1zM15 21h1v1h-1zM18 21h1v1h-1zM21 21h2v1h-2zM0 22h1v1h-1zM2 22h3v1h-3zM6 22h1v1h-1zM10 22h2v1h-2zM13 22h1v1h-1zM16 22h1v1h-1zM18 22h3v1h-3zM23 22h1v1h-1zM0 23h1v1h-1zM6 23h2v1h-2zM12 23h1v1h-1zM16 23h1v1h-1zM0 24h7v1h-7zM8 24h3v1h-3zM16 24h1v1h-1zM18 24h2v1h-2zM21 24h1v1h-1zM23 24h2v1h-2z" fill="#111"/></svg></div><div class="td" style="left:565px;width:132px;letter-spacing:-0.8px;text-indent:0.8px">2020-12-15  15:25:45</div><div class="td" style="left:697px;width:149px;letter-spacing:-0.8px;text-indent:0.8px">2020-12-30  15:25:45</div><div class="td" style="left:846px;width:94px;letter-spacing:0px;text-indent:0px">王五</div><div class="td on" style="left:940px;width:156px">开启（每码可扫5次）</div><div class="ops" style="left:1096px;width:247px"><span class="b1">扫码情况</span><span class="b2">导出溯源码</span><span class="b3 dis">作废</span></div></div>
<div class="tr" style="top:320px"><div class="td" style="left:0px;width:47px;letter-spacing:0px;text-indent:0px">8</div><div class="td" style="left:47px;width:100px;letter-spacing:0px;text-indent:0px">西蓝花</div><div class="td" style="left:147px;width:139px;letter-spacing:-0.66px;text-indent:0.66px">20200811141387</div><div class="td" style="left:286px;width:105px;letter-spacing:-1.16px;text-indent:1.16px">RKJHGDUJ2022</div><div class="td" style="left:391px;width:86px;letter-spacing:0px;text-indent:0px">10</div><div class="td qr" style="left:474px;width:88px"><svg width="32" height="32" viewBox="0 0 25 25"><path d="M0 0h7v1h-7zM8 0h1v1h-1zM16 0h1v1h-1zM18 0h7v1h-7zM0 1h1v1h-1zM6 1h2v1h-2zM9 1h3v1h-3zM17 1h2v1h-2zM24 1h1v1h-1zM0 2h1v1h-1zM2 2h3v1h-3zM6 2h3v1h-3zM11 2h1v1h-1zM13 2h1v1h-1zM15 2h4v1h-4zM20 2h3v1h-3zM24 2h1v1h-1zM0 3h1v1h-1zM2 3h3v1h-3zM6 3h4v1h-4zM12 3h1v1h-1zM14 3h1v1h-1zM17 3h2v1h-2zM20 3h3v1h-3zM24 3h1v1h-1zM0 4h1v1h-1zM2 4h3v1h-3zM6 4h3v1h-3zM10 4h1v1h-1zM15 4h1v1h-1zM18 4h1v1h-1zM20 4h3v1h-3zM24 4h1v1h-1zM0 5h1v1h-1zM6 5h1v1h-1zM10 5h1v1h-1zM12 5h1v1h-1zM17 5h2v1h-2zM24 5h1v1h-1zM0 6h8v1h-8zM11 6h1v1h-1zM15 6h2v1h-2zM18 6h7v1h-7zM0 7h1v1h-1zM2 7h1v1h-1zM5 7h2v1h-2zM8 7h2v1h-2zM13 7h2v1h-2zM17 7h1v1h-1zM20 7h2v1h-2zM23 7h1v1h-1zM1 8h1v1h-1zM5 8h3v1h-3zM9 8h2v1h-2zM12 8h1v1h-1zM14 8h2v1h-2zM20 8h2v1h-2zM1 9h3v1h-3zM5 9h1v1h-1zM7 9h1v1h-1zM10 9h3v1h-3zM16 9h1v1h-1zM20 9h1v1h-1zM23 9h2v1h-2zM0 10h1v1h-1zM3 10h1v1h-1zM7 10h2v1h-2zM11 10h2v1h-2zM14 10h2v1h-2zM19 10h1v1h-1zM21 10h1v1h-1zM23 10h2v1h-2zM0 11h1v1h-1zM2 11h1v1h-1zM6 11h1v1h-1zM8 11h2v1h-2zM11 11h1v1h-1zM13 11h3v1h-3zM17 11h1v1h-1zM7 12h1v1h-1zM9 12h2v1h-2zM14 12h3v1h-3zM18 12h1v1h-1zM20 12h2v1h-2zM8 13h1v1h-1zM10 13h2v1h-2zM19 13h1v1h-1zM24 13h1v1h-1zM0 14h2v1h-2zM3 14h1v1h-1zM7 14h1v1h-1zM9 14h1v1h-1zM11 14h1v1h-1zM14 14h2v1h-2zM17 14h1v1h-1zM19 14h1v1h-1zM23 14h1v1h-1zM5 15h2v1h-2zM9 15h1v1h-1zM14 15h2v1h-2zM18 15h2v1h-2zM22 15h1v1h-1zM0 16h1v1h-1zM4 16h2v1h-2zM11 16h1v1h-1zM14 16h2v1h-2zM19 16h1v1h-1zM22 16h2v1h-2zM0 17h1v1h-1zM4 17h2v1h-2zM9 17h1v1h-1zM12 17h1v1h-1zM15 17h1v1h-1zM17 17h3v1h-3zM21 17h1v1h-1zM23 17h2v1h-2zM0 18h7v1h-7zM8 18h1v1h-1zM11 18h1v1h-1zM13 18h1v1h-1zM16 18h2v1h-2zM24 18h1v1h-1zM0 19h1v1h-1zM6 19h1v1h-1zM8 19h1v1h-1zM10 19h1v1h-1zM13 19h2v1h-2zM16 19h1v1h-1zM18 19h2v1h-2zM24 19h1v1h-1zM0 20h1v1h-1zM2 20h3v1h-3zM6 20h2v1h-2zM10 20h1v1h-1zM13 20h2v1h-2zM19 20h1v1h-1zM23 20h1v1h-1zM0 21h1v1h-1zM2 21h3v1h-3zM6 21h1v1h-1zM8 21h1v1h-1zM10 21h1v1h-1zM12 21h1v1h-1zM15 21h1v1h-1zM18 21h1v1h-1zM21 21h2v1h-2zM0 22h1v1h-1zM2 22h3v1h-3zM6 22h1v1h-1zM10 22h2v1h-2zM13 22h1v1h-1zM16 22h1v1h-1zM18 22h3v1h-3zM23 22h1v1h-1zM0 23h1v1h-1zM6 23h2v1h-2zM12 23h1v1h-1zM16 23h1v1h-1zM0 24h7v1h-7zM8 24h3v1h-3zM16 24h1v1h-1zM18 24h2v1h-2zM21 24h1v1h-1zM23 24h2v1h-2z" fill="#111"/></svg></div><div class="td" style="left:565px;width:132px;letter-spacing:-0.8px;text-indent:0.8px">2020-12-15  15:25:45</div><div class="td" style="left:697px;width:149px;letter-spacing:-0.8px;text-indent:0.8px">2020-12-30  15:25:45</div><div class="td" style="left:846px;width:94px;letter-spacing:0px;text-indent:0px">王五</div><div class="td on" style="left:940px;width:156px">开启（每码可扫5次）</div><div class="ops" style="left:1096px;width:247px"><span class="b1">扫码情况</span><span class="b2">导出溯源码</span><span class="b3">作废</span></div></div>
<div class="tr" style="top:360px"><div class="td" style="left:0px;width:47px;letter-spacing:0px;text-indent:0px">9</div><div class="td" style="left:47px;width:100px;letter-spacing:0px;text-indent:0px">西蓝花</div><div class="td" style="left:147px;width:139px;letter-spacing:-0.66px;text-indent:0.66px">20200811141397</div><div class="td" style="left:286px;width:105px;letter-spacing:-1.16px;text-indent:1.16px">RKJHGDUJ2022</div><div class="td" style="left:391px;width:86px;letter-spacing:0px;text-indent:0px">10</div><div class="td qr" style="left:474px;width:88px"><svg width="32" height="32" viewBox="0 0 25 25"><path d="M0 0h7v1h-7zM8 0h1v1h-1zM16 0h1v1h-1zM18 0h7v1h-7zM0 1h1v1h-1zM6 1h2v1h-2zM9 1h3v1h-3zM17 1h2v1h-2zM24 1h1v1h-1zM0 2h1v1h-1zM2 2h3v1h-3zM6 2h3v1h-3zM11 2h1v1h-1zM13 2h1v1h-1zM15 2h4v1h-4zM20 2h3v1h-3zM24 2h1v1h-1zM0 3h1v1h-1zM2 3h3v1h-3zM6 3h4v1h-4zM12 3h1v1h-1zM14 3h1v1h-1zM17 3h2v1h-2zM20 3h3v1h-3zM24 3h1v1h-1zM0 4h1v1h-1zM2 4h3v1h-3zM6 4h3v1h-3zM10 4h1v1h-1zM15 4h1v1h-1zM18 4h1v1h-1zM20 4h3v1h-3zM24 4h1v1h-1zM0 5h1v1h-1zM6 5h1v1h-1zM10 5h1v1h-1zM12 5h1v1h-1zM17 5h2v1h-2zM24 5h1v1h-1zM0 6h8v1h-8zM11 6h1v1h-1zM15 6h2v1h-2zM18 6h7v1h-7zM0 7h1v1h-1zM2 7h1v1h-1zM5 7h2v1h-2zM8 7h2v1h-2zM13 7h2v1h-2zM17 7h1v1h-1zM20 7h2v1h-2zM23 7h1v1h-1zM1 8h1v1h-1zM5 8h3v1h-3zM9 8h2v1h-2zM12 8h1v1h-1zM14 8h2v1h-2zM20 8h2v1h-2zM1 9h3v1h-3zM5 9h1v1h-1zM7 9h1v1h-1zM10 9h3v1h-3zM16 9h1v1h-1zM20 9h1v1h-1zM23 9h2v1h-2zM0 10h1v1h-1zM3 10h1v1h-1zM7 10h2v1h-2zM11 10h2v1h-2zM14 10h2v1h-2zM19 10h1v1h-1zM21 10h1v1h-1zM23 10h2v1h-2zM0 11h1v1h-1zM2 11h1v1h-1zM6 11h1v1h-1zM8 11h2v1h-2zM11 11h1v1h-1zM13 11h3v1h-3zM17 11h1v1h-1zM7 12h1v1h-1zM9 12h2v1h-2zM14 12h3v1h-3zM18 12h1v1h-1zM20 12h2v1h-2zM8 13h1v1h-1zM10 13h2v1h-2zM19 13h1v1h-1zM24 13h1v1h-1zM0 14h2v1h-2zM3 14h1v1h-1zM7 14h1v1h-1zM9 14h1v1h-1zM11 14h1v1h-1zM14 14h2v1h-2zM17 14h1v1h-1zM19 14h1v1h-1zM23 14h1v1h-1zM5 15h2v1h-2zM9 15h1v1h-1zM14 15h2v1h-2zM18 15h2v1h-2zM22 15h1v1h-1zM0 16h1v1h-1zM4 16h2v1h-2zM11 16h1v1h-1zM14 16h2v1h-2zM19 16h1v1h-1zM22 16h2v1h-2zM0 17h1v1h-1zM4 17h2v1h-2zM9 17h1v1h-1zM12 17h1v1h-1zM15 17h1v1h-1zM17 17h3v1h-3zM21 17h1v1h-1zM23 17h2v1h-2zM0 18h7v1h-7zM8 18h1v1h-1zM11 18h1v1h-1zM13 18h1v1h-1zM16 18h2v1h-2zM24 18h1v1h-1zM0 19h1v1h-1zM6 19h1v1h-1zM8 19h1v1h-1zM10 19h1v1h-1zM13 19h2v1h-2zM16 19h1v1h-1zM18 19h2v1h-2zM24 19h1v1h-1zM0 20h1v1h-1zM2 20h3v1h-3zM6 20h2v1h-2zM10 20h1v1h-1zM13 20h2v1h-2zM19 20h1v1h-1zM23 20h1v1h-1zM0 21h1v1h-1zM2 21h3v1h-3zM6 21h1v1h-1zM8 21h1v1h-1zM10 21h1v1h-1zM12 21h1v1h-1zM15 21h1v1h-1zM18 21h1v1h-1zM21 21h2v1h-2zM0 22h1v1h-1zM2 22h3v1h-3zM6 22h1v1h-1zM10 22h2v1h-2zM13 22h1v1h-1zM16 22h1v1h-1zM18 22h3v1h-3zM23 22h1v1h-1zM0 23h1v1h-1zM6 23h2v1h-2zM12 23h1v1h-1zM16 23h1v1h-1zM0 24h7v1h-7zM8 24h3v1h-3zM16 24h1v1h-1zM18 24h2v1h-2zM21 24h1v1h-1zM23 24h2v1h-2z" fill="#111"/></svg></div><div class="td" style="left:565px;width:132px;letter-spacing:-0.8px;text-indent:0.8px">2020-12-15  15:25:45</div><div class="td" style="left:697px;width:149px;letter-spacing:-0.8px;text-indent:0.8px">2020-12-30  15:25:45</div><div class="td" style="left:846px;width:94px;letter-spacing:0px;text-indent:0px">王五</div><div class="td on" style="left:940px;width:156px">开启（每码可扫5次）</div><div class="ops" style="left:1096px;width:247px"><span class="b1">扫码情况</span><span class="b2">导出溯源码</span><span class="b3">作废</span></div></div>
<div class="tr" style="top:400px"><div class="td" style="left:0px;width:47px;letter-spacing:0px;text-indent:0px">10</div><div class="td" style="left:47px;width:100px;letter-spacing:0px;text-indent:0px">胡萝卜</div><div class="td" style="left:147px;width:139px;letter-spacing:-0.66px;text-indent:0.66px">20200811141157</div><div class="td" style="left:286px;width:105px;letter-spacing:-1.16px;text-indent:1.16px">RKJHGDUJ2022</div><div class="td" style="left:391px;width:86px;letter-spacing:0px;text-indent:0px">10</div><div class="td qr" style="left:474px;width:88px"><svg width="32" height="32" viewBox="0 0 25 25"><path d="M0 0h7v1h-7zM8 0h1v1h-1zM16 0h1v1h-1zM18 0h7v1h-7zM0 1h1v1h-1zM6 1h2v1h-2zM9 1h3v1h-3zM17 1h2v1h-2zM24 1h1v1h-1zM0 2h1v1h-1zM2 2h3v1h-3zM6 2h3v1h-3zM11 2h1v1h-1zM13 2h1v1h-1zM15 2h4v1h-4zM20 2h3v1h-3zM24 2h1v1h-1zM0 3h1v1h-1zM2 3h3v1h-3zM6 3h4v1h-4zM12 3h1v1h-1zM14 3h1v1h-1zM17 3h2v1h-2zM20 3h3v1h-3zM24 3h1v1h-1zM0 4h1v1h-1zM2 4h3v1h-3zM6 4h3v1h-3zM10 4h1v1h-1zM15 4h1v1h-1zM18 4h1v1h-1zM20 4h3v1h-3zM24 4h1v1h-1zM0 5h1v1h-1zM6 5h1v1h-1zM10 5h1v1h-1zM12 5h1v1h-1zM17 5h2v1h-2zM24 5h1v1h-1zM0 6h8v1h-8zM11 6h1v1h-1zM15 6h2v1h-2zM18 6h7v1h-7zM0 7h1v1h-1zM2 7h1v1h-1zM5 7h2v1h-2zM8 7h2v1h-2zM13 7h2v1h-2zM17 7h1v1h-1zM20 7h2v1h-2zM23 7h1v1h-1zM1 8h1v1h-1zM5 8h3v1h-3zM9 8h2v1h-2zM12 8h1v1h-1zM14 8h2v1h-2zM20 8h2v1h-2zM1 9h3v1h-3zM5 9h1v1h-1zM7 9h1v1h-1zM10 9h3v1h-3zM16 9h1v1h-1zM20 9h1v1h-1zM23 9h2v1h-2zM0 10h1v1h-1zM3 10h1v1h-1zM7 10h2v1h-2zM11 10h2v1h-2zM14 10h2v1h-2zM19 10h1v1h-1zM21 10h1v1h-1zM23 10h2v1h-2zM0 11h1v1h-1zM2 11h1v1h-1zM6 11h1v1h-1zM8 11h2v1h-2zM11 11h1v1h-1zM13 11h3v1h-3zM17 11h1v1h-1zM7 12h1v1h-1zM9 12h2v1h-2zM14 12h3v1h-3zM18 12h1v1h-1zM20 12h2v1h-2zM8 13h1v1h-1zM10 13h2v1h-2zM19 13h1v1h-1zM24 13h1v1h-1zM0 14h2v1h-2zM3 14h1v1h-1zM7 14h1v1h-1zM9 14h1v1h-1zM11 14h1v1h-1zM14 14h2v1h-2zM17 14h1v1h-1zM19 14h1v1h-1zM23 14h1v1h-1zM5 15h2v1h-2zM9 15h1v1h-1zM14 15h2v1h-2zM18 15h2v1h-2zM22 15h1v1h-1zM0 16h1v1h-1zM4 16h2v1h-2zM11 16h1v1h-1zM14 16h2v1h-2zM19 16h1v1h-1zM22 16h2v1h-2zM0 17h1v1h-1zM4 17h2v1h-2zM9 17h1v1h-1zM12 17h1v1h-1zM15 17h1v1h-1zM17 17h3v1h-3zM21 17h1v1h-1zM23 17h2v1h-2zM0 18h7v1h-7zM8 18h1v1h-1zM11 18h1v1h-1zM13 18h1v1h-1zM16 18h2v1h-2zM24 18h1v1h-1zM0 19h1v1h-1zM6 19h1v1h-1zM8 19h1v1h-1zM10 19h1v1h-1zM13 19h2v1h-2zM16 19h1v1h-1zM18 19h2v1h-2zM24 19h1v1h-1zM0 20h1v1h-1zM2 20h3v1h-3zM6 20h2v1h-2zM10 20h1v1h-1zM13 20h2v1h-2zM19 20h1v1h-1zM23 20h1v1h-1zM0 21h1v1h-1zM2 21h3v1h-3zM6 21h1v1h-1zM8 21h1v1h-1zM10 21h1v1h-1zM12 21h1v1h-1zM15 21h1v1h-1zM18 21h1v1h-1zM21 21h2v1h-2zM0 22h1v1h-1zM2 22h3v1h-3zM6 22h1v1h-1zM10 22h2v1h-2zM13 22h1v1h-1zM16 22h1v1h-1zM18 22h3v1h-3zM23 22h1v1h-1zM0 23h1v1h-1zM6 23h2v1h-2zM12 23h1v1h-1zM16 23h1v1h-1zM0 24h7v1h-7zM8 24h3v1h-3zM16 24h1v1h-1zM18 24h2v1h-2zM21 24h1v1h-1zM23 24h2v1h-2z" fill="#111"/></svg></div><div class="td" style="left:565px;width:132px;letter-spacing:-0.8px;text-indent:0.8px">2020-10-15  15:25:45</div><div class="td" style="left:697px;width:149px;letter-spacing:-0.8px;text-indent:0.8px">2020-12-15  15:25:45</div><div class="td" style="left:846px;width:94px;letter-spacing:0px;text-indent:0px">于胖子</div><div class="td off" style="left:940px;width:156px">关闭</div><div class="ops" style="left:1096px;width:247px"><span class="b1">扫码情况</span><span class="b2">导出溯源码</span><span class="b3">作废</span></div></div>
<div class="tr" style="top:440px"><div class="td" style="left:0px;width:47px;letter-spacing:0px;text-indent:0px">11</div><div class="td" style="left:47px;width:100px;letter-spacing:0px;text-indent:0px">胡萝卜</div><div class="td" style="left:147px;width:139px;letter-spacing:-0.66px;text-indent:0.66px">20200811141257</div><div class="td" style="left:286px;width:105px;letter-spacing:-1.16px;text-indent:1.16px">RKJHGDUJ2022</div><div class="td" style="left:391px;width:86px;letter-spacing:0px;text-indent:0px">10</div><div class="td qr" style="left:474px;width:88px"><svg width="32" height="32" viewBox="0 0 25 25"><path d="M0 0h7v1h-7zM8 0h1v1h-1zM16 0h1v1h-1zM18 0h7v1h-7zM0 1h1v1h-1zM6 1h2v1h-2zM9 1h3v1h-3zM17 1h2v1h-2zM24 1h1v1h-1zM0 2h1v1h-1zM2 2h3v1h-3zM6 2h3v1h-3zM11 2h1v1h-1zM13 2h1v1h-1zM15 2h4v1h-4zM20 2h3v1h-3zM24 2h1v1h-1zM0 3h1v1h-1zM2 3h3v1h-3zM6 3h4v1h-4zM12 3h1v1h-1zM14 3h1v1h-1zM17 3h2v1h-2zM20 3h3v1h-3zM24 3h1v1h-1zM0 4h1v1h-1zM2 4h3v1h-3zM6 4h3v1h-3zM10 4h1v1h-1zM15 4h1v1h-1zM18 4h1v1h-1zM20 4h3v1h-3zM24 4h1v1h-1zM0 5h1v1h-1zM6 5h1v1h-1zM10 5h1v1h-1zM12 5h1v1h-1zM17 5h2v1h-2zM24 5h1v1h-1zM0 6h8v1h-8zM11 6h1v1h-1zM15 6h2v1h-2zM18 6h7v1h-7zM0 7h1v1h-1zM2 7h1v1h-1zM5 7h2v1h-2zM8 7h2v1h-2zM13 7h2v1h-2zM17 7h1v1h-1zM20 7h2v1h-2zM23 7h1v1h-1zM1 8h1v1h-1zM5 8h3v1h-3zM9 8h2v1h-2zM12 8h1v1h-1zM14 8h2v1h-2zM20 8h2v1h-2zM1 9h3v1h-3zM5 9h1v1h-1zM7 9h1v1h-1zM10 9h3v1h-3zM16 9h1v1h-1zM20 9h1v1h-1zM23 9h2v1h-2zM0 10h1v1h-1zM3 10h1v1h-1zM7 10h2v1h-2zM11 10h2v1h-2zM14 10h2v1h-2zM19 10h1v1h-1zM21 10h1v1h-1zM23 10h2v1h-2zM0 11h1v1h-1zM2 11h1v1h-1zM6 11h1v1h-1zM8 11h2v1h-2zM11 11h1v1h-1zM13 11h3v1h-3zM17 11h1v1h-1zM7 12h1v1h-1zM9 12h2v1h-2zM14 12h3v1h-3zM18 12h1v1h-1zM20 12h2v1h-2zM8 13h1v1h-1zM10 13h2v1h-2zM19 13h1v1h-1zM24 13h1v1h-1zM0 14h2v1h-2zM3 14h1v1h-1zM7 14h1v1h-1zM9 14h1v1h-1zM11 14h1v1h-1zM14 14h2v1h-2zM17 14h1v1h-1zM19 14h1v1h-1zM23 14h1v1h-1zM5 15h2v1h-2zM9 15h1v1h-1zM14 15h2v1h-2zM18 15h2v1h-2zM22 15h1v1h-1zM0 16h1v1h-1zM4 16h2v1h-2zM11 16h1v1h-1zM14 16h2v1h-2zM19 16h1v1h-1zM22 16h2v1h-2zM0 17h1v1h-1zM4 17h2v1h-2zM9 17h1v1h-1zM12 17h1v1h-1zM15 17h1v1h-1zM17 17h3v1h-3zM21 17h1v1h-1zM23 17h2v1h-2zM0 18h7v1h-7zM8 18h1v1h-1zM11 18h1v1h-1zM13 18h1v1h-1zM16 18h2v1h-2zM24 18h1v1h-1zM0 19h1v1h-1zM6 19h1v1h-1zM8 19h1v1h-1zM10 19h1v1h-1zM13 19h2v1h-2zM16 19h1v1h-1zM18 19h2v1h-2zM24 19h1v1h-1zM0 20h1v1h-1zM2 20h3v1h-3zM6 20h2v1h-2zM10 20h1v1h-1zM13 20h2v1h-2zM19 20h1v1h-1zM23 20h1v1h-1zM0 21h1v1h-1zM2 21h3v1h-3zM6 21h1v1h-1zM8 21h1v1h-1zM10 21h1v1h-1zM12 21h1v1h-1zM15 21h1v1h-1zM18 21h1v1h-1zM21 21h2v1h-2zM0 22h1v1h-1zM2 22h3v1h-3zM6 22h1v1h-1zM10 22h2v1h-2zM13 22h1v1h-1zM16 22h1v1h-1zM18 22h3v1h-3zM23 22h1v1h-1zM0 23h1v1h-1zM6 23h2v1h-2zM12 23h1v1h-1zM16 23h1v1h-1zM0 24h7v1h-7zM8 24h3v1h-3zM16 24h1v1h-1zM18 24h2v1h-2zM21 24h1v1h-1zM23 24h2v1h-2z" fill="#111"/></svg></div><div class="td" style="left:565px;width:132px;letter-spacing:-0.8px;text-indent:0.8px">2020-10-15  15:25:45</div><div class="td" style="left:697px;width:149px;letter-spacing:-0.8px;text-indent:0.8px">2020-12-15  15:25:45</div><div class="td" style="left:846px;width:94px;letter-spacing:0px;text-indent:0px">于胖子</div><div class="td on" style="left:940px;width:156px">开启（每码可扫5次）</div><div class="ops" style="left:1096px;width:247px"><span class="b1">扫码情况</span><span class="b2">导出溯源码</span><span class="b3">作废</span></div></div>
<div class="tr" style="top:480px"><div class="td" style="left:0px;width:47px;letter-spacing:0px;text-indent:0px">12</div><div class="td" style="left:47px;width:100px;letter-spacing:0px;text-indent:0px">胡萝卜</div><div class="td" style="left:147px;width:139px;letter-spacing:-0.66px;text-indent:0.66px">20200811141057</div><div class="td" style="left:286px;width:105px;letter-spacing:-1.16px;text-indent:1.16px">RKJHGDUJ2022</div><div class="td" style="left:391px;width:86px;letter-spacing:0px;text-indent:0px">10</div><div class="td qr" style="left:474px;width:88px"><svg width="32" height="32" viewBox="0 0 25 25"><path d="M0 0h7v1h-7zM8 0h1v1h-1zM16 0h1v1h-1zM18 0h7v1h-7zM0 1h1v1h-1zM6 1h2v1h-2zM9 1h3v1h-3zM17 1h2v1h-2zM24 1h1v1h-1zM0 2h1v1h-1zM2 2h3v1h-3zM6 2h3v1h-3zM11 2h1v1h-1zM13 2h1v1h-1zM15 2h4v1h-4zM20 2h3v1h-3zM24 2h1v1h-1zM0 3h1v1h-1zM2 3h3v1h-3zM6 3h4v1h-4zM12 3h1v1h-1zM14 3h1v1h-1zM17 3h2v1h-2zM20 3h3v1h-3zM24 3h1v1h-1zM0 4h1v1h-1zM2 4h3v1h-3zM6 4h3v1h-3zM10 4h1v1h-1zM15 4h1v1h-1zM18 4h1v1h-1zM20 4h3v1h-3zM24 4h1v1h-1zM0 5h1v1h-1zM6 5h1v1h-1zM10 5h1v1h-1zM12 5h1v1h-1zM17 5h2v1h-2zM24 5h1v1h-1zM0 6h8v1h-8zM11 6h1v1h-1zM15 6h2v1h-2zM18 6h7v1h-7zM0 7h1v1h-1zM2 7h1v1h-1zM5 7h2v1h-2zM8 7h2v1h-2zM13 7h2v1h-2zM17 7h1v1h-1zM20 7h2v1h-2zM23 7h1v1h-1zM1 8h1v1h-1zM5 8h3v1h-3zM9 8h2v1h-2zM12 8h1v1h-1zM14 8h2v1h-2zM20 8h2v1h-2zM1 9h3v1h-3zM5 9h1v1h-1zM7 9h1v1h-1zM10 9h3v1h-3zM16 9h1v1h-1zM20 9h1v1h-1zM23 9h2v1h-2zM0 10h1v1h-1zM3 10h1v1h-1zM7 10h2v1h-2zM11 10h2v1h-2zM14 10h2v1h-2zM19 10h1v1h-1zM21 10h1v1h-1zM23 10h2v1h-2zM0 11h1v1h-1zM2 11h1v1h-1zM6 11h1v1h-1zM8 11h2v1h-2zM11 11h1v1h-1zM13 11h3v1h-3zM17 11h1v1h-1zM7 12h1v1h-1zM9 12h2v1h-2zM14 12h3v1h-3zM18 12h1v1h-1zM20 12h2v1h-2zM8 13h1v1h-1zM10 13h2v1h-2zM19 13h1v1h-1zM24 13h1v1h-1zM0 14h2v1h-2zM3 14h1v1h-1zM7 14h1v1h-1zM9 14h1v1h-1zM11 14h1v1h-1zM14 14h2v1h-2zM17 14h1v1h-1zM19 14h1v1h-1zM23 14h1v1h-1zM5 15h2v1h-2zM9 15h1v1h-1zM14 15h2v1h-2zM18 15h2v1h-2zM22 15h1v1h-1zM0 16h1v1h-1zM4 16h2v1h-2zM11 16h1v1h-1zM14 16h2v1h-2zM19 16h1v1h-1zM22 16h2v1h-2zM0 17h1v1h-1zM4 17h2v1h-2zM9 17h1v1h-1zM12 17h1v1h-1zM15 17h1v1h-1zM17 17h3v1h-3zM21 17h1v1h-1zM23 17h2v1h-2zM0 18h7v1h-7zM8 18h1v1h-1zM11 18h1v1h-1zM13 18h1v1h-1zM16 18h2v1h-2zM24 18h1v1h-1zM0 19h1v1h-1zM6 19h1v1h-1zM8 19h1v1h-1zM10 19h1v1h-1zM13 19h2v1h-2zM16 19h1v1h-1zM18 19h2v1h-2zM24 19h1v1h-1zM0 20h1v1h-1zM2 20h3v1h-3zM6 20h2v1h-2zM10 20h1v1h-1zM13 20h2v1h-2zM19 20h1v1h-1zM23 20h1v1h-1zM0 21h1v1h-1zM2 21h3v1h-3zM6 21h1v1h-1zM8 21h1v1h-1zM10 21h1v1h-1zM12 21h1v1h-1zM15 21h1v1h-1zM18 21h1v1h-1zM21 21h2v1h-2zM0 22h1v1h-1zM2 22h3v1h-3zM6 22h1v1h-1zM10 22h2v1h-2zM13 22h1v1h-1zM16 22h1v1h-1zM18 22h3v1h-3zM23 22h1v1h-1zM0 23h1v1h-1zM6 23h2v1h-2zM12 23h1v1h-1zM16 23h1v1h-1zM0 24h7v1h-7zM8 24h3v1h-3zM16 24h1v1h-1zM18 24h2v1h-2zM21 24h1v1h-1zM23 24h2v1h-2z" fill="#111"/></svg></div><div class="td" style="left:565px;width:132px;letter-spacing:-0.8px;text-indent:0.8px">2020-10-15  15:25:45</div><div class="td" style="left:697px;width:149px;letter-spacing:-0.8px;text-indent:0.8px">2020-12-15  15:25:45</div><div class="td" style="left:846px;width:94px;letter-spacing:0px;text-indent:0px">于胖子</div><div class="td off" style="left:940px;width:156px">关闭</div><div class="ops" style="left:1096px;width:247px"><span class="b1">扫码情况</span><span class="b2">导出溯源码</span><span class="b3">作废</span></div></div>
<div class="tr" style="top:520px"><div class="td" style="left:0px;width:47px;letter-spacing:0px;text-indent:0px">13</div><div class="td" style="left:47px;width:100px;letter-spacing:0px;text-indent:0px">青菜</div><div class="td" style="left:147px;width:139px;letter-spacing:-0.66px;text-indent:0.66px">20200811141557</div><div class="td" style="left:286px;width:105px;letter-spacing:-1.16px;text-indent:1.16px">RKJHGDUJ2022</div><div class="td" style="left:391px;width:86px;letter-spacing:0px;text-indent:0px">10</div><div class="td qr" style="left:474px;width:88px"><svg width="32" height="32" viewBox="0 0 25 25"><path d="M0 0h7v1h-7zM8 0h1v1h-1zM16 0h1v1h-1zM18 0h7v1h-7zM0 1h1v1h-1zM6 1h2v1h-2zM9 1h3v1h-3zM17 1h2v1h-2zM24 1h1v1h-1zM0 2h1v1h-1zM2 2h3v1h-3zM6 2h3v1h-3zM11 2h1v1h-1zM13 2h1v1h-1zM15 2h4v1h-4zM20 2h3v1h-3zM24 2h1v1h-1zM0 3h1v1h-1zM2 3h3v1h-3zM6 3h4v1h-4zM12 3h1v1h-1zM14 3h1v1h-1zM17 3h2v1h-2zM20 3h3v1h-3zM24 3h1v1h-1zM0 4h1v1h-1zM2 4h3v1h-3zM6 4h3v1h-3zM10 4h1v1h-1zM15 4h1v1h-1zM18 4h1v1h-1zM20 4h3v1h-3zM24 4h1v1h-1zM0 5h1v1h-1zM6 5h1v1h-1zM10 5h1v1h-1zM12 5h1v1h-1zM17 5h2v1h-2zM24 5h1v1h-1zM0 6h8v1h-8zM11 6h1v1h-1zM15 6h2v1h-2zM18 6h7v1h-7zM0 7h1v1h-1zM2 7h1v1h-1zM5 7h2v1h-2zM8 7h2v1h-2zM13 7h2v1h-2zM17 7h1v1h-1zM20 7h2v1h-2zM23 7h1v1h-1zM1 8h1v1h-1zM5 8h3v1h-3zM9 8h2v1h-2zM12 8h1v1h-1zM14 8h2v1h-2zM20 8h2v1h-2zM1 9h3v1h-3zM5 9h1v1h-1zM7 9h1v1h-1zM10 9h3v1h-3zM16 9h1v1h-1zM20 9h1v1h-1zM23 9h2v1h-2zM0 10h1v1h-1zM3 10h1v1h-1zM7 10h2v1h-2zM11 10h2v1h-2zM14 10h2v1h-2zM19 10h1v1h-1zM21 10h1v1h-1zM23 10h2v1h-2zM0 11h1v1h-1zM2 11h1v1h-1zM6 11h1v1h-1zM8 11h2v1h-2zM11 11h1v1h-1zM13 11h3v1h-3zM17 11h1v1h-1zM7 12h1v1h-1zM9 12h2v1h-2zM14 12h3v1h-3zM18 12h1v1h-1zM20 12h2v1h-2zM8 13h1v1h-1zM10 13h2v1h-2zM19 13h1v1h-1zM24 13h1v1h-1zM0 14h2v1h-2zM3 14h1v1h-1zM7 14h1v1h-1zM9 14h1v1h-1zM11 14h1v1h-1zM14 14h2v1h-2zM17 14h1v1h-1zM19 14h1v1h-1zM23 14h1v1h-1zM5 15h2v1h-2zM9 15h1v1h-1zM14 15h2v1h-2zM18 15h2v1h-2zM22 15h1v1h-1zM0 16h1v1h-1zM4 16h2v1h-2zM11 16h1v1h-1zM14 16h2v1h-2zM19 16h1v1h-1zM22 16h2v1h-2zM0 17h1v1h-1zM4 17h2v1h-2zM9 17h1v1h-1zM12 17h1v1h-1zM15 17h1v1h-1zM17 17h3v1h-3zM21 17h1v1h-1zM23 17h2v1h-2zM0 18h7v1h-7zM8 18h1v1h-1zM11 18h1v1h-1zM13 18h1v1h-1zM16 18h2v1h-2zM24 18h1v1h-1zM0 19h1v1h-1zM6 19h1v1h-1zM8 19h1v1h-1zM10 19h1v1h-1zM13 19h2v1h-2zM16 19h1v1h-1zM18 19h2v1h-2zM24 19h1v1h-1zM0 20h1v1h-1zM2 20h3v1h-3zM6 20h2v1h-2zM10 20h1v1h-1zM13 20h2v1h-2zM19 20h1v1h-1zM23 20h1v1h-1zM0 21h1v1h-1zM2 21h3v1h-3zM6 21h1v1h-1zM8 21h1v1h-1zM10 21h1v1h-1zM12 21h1v1h-1zM15 21h1v1h-1zM18 21h1v1h-1zM21 21h2v1h-2zM0 22h1v1h-1zM2 22h3v1h-3zM6 22h1v1h-1zM10 22h2v1h-2zM13 22h1v1h-1zM16 22h1v1h-1zM18 22h3v1h-3zM23 22h1v1h-1zM0 23h1v1h-1zM6 23h2v1h-2zM12 23h1v1h-1zM16 23h1v1h-1zM0 24h7v1h-7zM8 24h3v1h-3zM16 24h1v1h-1zM18 24h2v1h-2zM21 24h1v1h-1zM23 24h2v1h-2z" fill="#111"/></svg></div><div class="td" style="left:565px;width:132px;letter-spacing:-0.8px;text-indent:0.8px">2020-11-15  15:25:45</div><div class="td" style="left:697px;width:149px;letter-spacing:-0.8px;text-indent:0.8px">2020-12-10  15:25:45</div><div class="td" style="left:846px;width:94px;letter-spacing:0px;text-indent:0px">胡八一</div><div class="td on" style="left:940px;width:156px">开启（每码可扫5次）</div><div class="ops" style="left:1096px;width:247px"><span class="b1">扫码情况</span><span class="b2">导出溯源码</span><span class="b3">作废</span></div></div>
<div class="vl" style="left:-1px;top:40px;height:522px"></div>
<div class="vl" style="left:46px;top:40px;height:522px"></div>
<div class="vl" style="left:146px;top:40px;height:522px"></div>
<div class="vl" style="left:285px;top:40px;height:522px"></div>
<div class="vl" style="left:390px;top:40px;height:522px"></div>
<div class="vl" style="left:476px;top:40px;height:522px"></div>
<div class="vl" style="left:564px;top:40px;height:522px"></div>
<div class="vl" style="left:696px;top:40px;height:522px"></div>
<div class="vl" style="left:845px;top:40px;height:522px"></div>
<div class="vl" style="left:939px;top:40px;height:522px"></div>
<div class="vl" style="left:1095px;top:40px;height:522px"></div>
<div class="vl" style="left:1342px;top:40px;height:522px"></div>
</div>
<div class="foot" style="left:1300px">周三</div>
<svg class="abs" style="left:1346px;top:738px" width="32" height="32" viewBox="0 0 16 16"><circle cx="8" cy="8" r="3.8" fill="#f0a417"/><g stroke="#f0a417" stroke-width="1.1" stroke-linecap="round"><path d="M8 0.6V2.4 M8 13.6V15.4 M0.6 8H2.4 M13.6 8H15.4 M2.8 2.8L4 4 M12 12L13.2 13.2 M13.2 2.8L12 4 M4 12L2.8 13.2"/></g></svg>
<div class="foot" style="left:1390px;letter-spacing:-0.7px">20℃</div>
<div class="foot" style="left:1438px;letter-spacing:-0.4px">10月26日</div>
<div class="foot" style="left:1518px;letter-spacing:-0.8px">16:18</div>
</div></body></html>
